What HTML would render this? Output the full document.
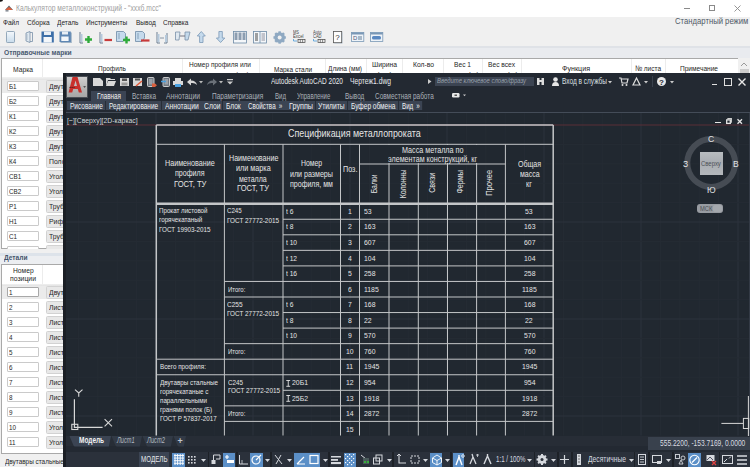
<!DOCTYPE html><html><head><meta charset="utf-8"><style>
*{margin:0;padding:0;box-sizing:border-box}
html,body{width:750px;height:467px;overflow:hidden}
body{position:relative;background:#f0f0f0;font-family:'Liberation Sans',sans-serif}
.a{position:absolute;white-space:nowrap}
svg{position:absolute;overflow:visible}

</style></head><body>
<div class="a" style="left:0px;top:0px;width:750px;height:16.8px;background:#ffffff;"></div>
<svg style="left:4px;top:4px" width="10" height="8" viewBox="0 0 10 8"><path d="M1 6 L5 1.5 L9 6 Z" fill="#5a6068"/><path d="M1.8 5.2 L5 3 L8.2 5.2 V6 H1.8Z" fill="#d8603f"/><rect x="1.5" y="6" width="3" height="1.6" fill="#8a9098"/></svg>
<svg style="left:0;top:0" width="3" height="2"><ellipse cx="0.5" cy="0" rx="2.5" ry="1.8" fill="#111"/></svg>
<span class="a" style="left:15.50px;top:3.28px;font-family:'Liberation Sans',sans-serif;font-size:8.5px;color:#a0a0a0;font-weight:400;line-height:11.05px;transform:scaleX(0.7916);transform-origin:0 50%;">Калькулятор металлоконструкций - &quot;xxxб.mcc&quot;</span>
<div class="a" style="left:684px;top:8px;width:6px;height:1px;background:#8a8a8a;"></div>
<div class="a" style="left:709px;top:5px;width:6px;height:6px;border:1px solid #8a8a8a"></div>
<svg style="left:734px;top:5px" width="7" height="7"><path d="M0.5 0.5 L6.5 6.5 M6.5 0.5 L0.5 6.5" stroke="#8a8a8a" stroke-width="0.9"/></svg>
<span class="a" style="left:3.20px;top:18.10px;font-family:'Liberation Sans',sans-serif;font-size:8px;color:#1e1e1e;font-weight:400;line-height:10.40px;transform:scaleX(0.8133);transform-origin:0 50%;">Файл</span>
<span class="a" style="left:26.70px;top:18.10px;font-family:'Liberation Sans',sans-serif;font-size:8px;color:#1e1e1e;font-weight:400;line-height:10.40px;transform:scaleX(0.8251);transform-origin:0 50%;">Сборка</span>
<span class="a" style="left:57.30px;top:18.10px;font-family:'Liberation Sans',sans-serif;font-size:8px;color:#1e1e1e;font-weight:400;line-height:10.40px;transform:scaleX(0.8085);transform-origin:0 50%;">Деталь</span>
<span class="a" style="left:85.90px;top:18.10px;font-family:'Liberation Sans',sans-serif;font-size:8px;color:#1e1e1e;font-weight:400;line-height:10.40px;transform:scaleX(0.8278);transform-origin:0 50%;">Инструменты</span>
<span class="a" style="left:135.50px;top:18.10px;font-family:'Liberation Sans',sans-serif;font-size:8px;color:#1e1e1e;font-weight:400;line-height:10.40px;transform:scaleX(0.8145);transform-origin:0 50%;">Вывод</span>
<span class="a" style="left:162.70px;top:18.10px;font-family:'Liberation Sans',sans-serif;font-size:8px;color:#1e1e1e;font-weight:400;line-height:10.40px;transform:scaleX(0.8060);transform-origin:0 50%;">Справка</span>
<span class="a" style="left:674.70px;top:15.78px;font-family:'Liberation Sans',sans-serif;font-size:8.5px;color:#4f5866;font-weight:400;line-height:11.05px;transform:scaleX(0.9046);transform-origin:0 50%;">Стандартный режим</span>
<div class="a" style="left:0px;top:46px;width:750px;height:2px;background:#dfe2e7;"></div>
<div class="a" style="left:0px;top:48px;width:750px;height:10px;background:#e9ebef;"></div>
<span class="a" style="left:3.50px;top:48.10px;font-family:'Liberation Sans',sans-serif;font-size:8px;color:#4a5a70;font-weight:700;line-height:10.40px;transform:scaleX(0.8373);transform-origin:0 50%;">Отправочные марки</span>
<div class="a" style="left:1px;top:58px;width:737px;height:191px;background:#ffffff;border:1px solid #a9a9a9;border-right:none"></div>
<div class="a" style="left:42px;top:59px;width:1px;height:18px;background:#ececec;"></div>
<div class="a" style="left:182px;top:59px;width:1px;height:18px;background:#ececec;"></div>
<div class="a" style="left:258.5px;top:59px;width:1px;height:18px;background:#ececec;"></div>
<div class="a" style="left:324.7px;top:59px;width:1px;height:18px;background:#ececec;"></div>
<div class="a" style="left:365.7px;top:59px;width:1px;height:18px;background:#ececec;"></div>
<div class="a" style="left:401.5px;top:59px;width:1px;height:18px;background:#ececec;"></div>
<div class="a" style="left:443.4px;top:59px;width:1px;height:18px;background:#ececec;"></div>
<div class="a" style="left:481.5px;top:59px;width:1px;height:18px;background:#ececec;"></div>
<div class="a" style="left:521px;top:59px;width:1px;height:18px;background:#ececec;"></div>
<div class="a" style="left:631px;top:59px;width:1px;height:18px;background:#ececec;"></div>
<div class="a" style="left:664.8px;top:59px;width:1px;height:18px;background:#ececec;"></div>
<div class="a" style="left:2px;top:77px;width:736px;height:3px;background:linear-gradient(#f2f2f2,#e2e2e2)"></div>
<span class="a" style="left:13.00px;top:64.60px;font-family:'Liberation Sans',sans-serif;font-size:8px;color:#262626;font-weight:400;line-height:10.40px;transform:scaleX(0.8410);transform-origin:0 50%;">Марка</span>
<span class="a" style="left:98.00px;top:64.40px;font-family:'Liberation Sans',sans-serif;font-size:8px;color:#262626;font-weight:400;line-height:10.40px;transform:scaleX(0.8105);transform-origin:0 50%;">Профиль</span>
<span class="a" style="left:189.00px;top:60.00px;font-family:'Liberation Sans',sans-serif;font-size:8px;color:#262626;font-weight:400;line-height:10.40px;transform:scaleX(0.8161);transform-origin:0 50%;">Номер профиля или</span>
<span class="a" style="left:189.00px;top:69.50px;font-family:'Liberation Sans',sans-serif;font-size:8px;color:#262626;font-weight:400;line-height:10.40px;transform:scaleX(0.8047);transform-origin:0 50%;">размеры листа (мм)</span>
<span class="a" style="left:274.00px;top:64.50px;font-family:'Liberation Sans',sans-serif;font-size:8px;color:#262626;font-weight:400;line-height:10.40px;transform:scaleX(0.8056);transform-origin:0 50%;">Марка стали</span>
<span class="a" style="left:328.00px;top:64.00px;font-family:'Liberation Sans',sans-serif;font-size:8px;color:#262626;font-weight:400;line-height:10.40px;transform:scaleX(0.8098);transform-origin:0 50%;">Длина (мм)</span>
<span class="a" style="left:371.50px;top:60.00px;font-family:'Liberation Sans',sans-serif;font-size:8px;color:#262626;font-weight:400;line-height:10.40px;transform:scaleX(0.8448);transform-origin:0 50%;">Ширина</span>
<span class="a" style="left:376.50px;top:69.50px;font-family:'Liberation Sans',sans-serif;font-size:8px;color:#262626;font-weight:400;line-height:10.40px;transform:scaleX(0.9187);transform-origin:0 50%;">(мм)</span>
<span class="a" style="left:412.50px;top:60.00px;font-family:'Liberation Sans',sans-serif;font-size:8px;color:#262626;font-weight:400;line-height:10.40px;transform:scaleX(0.8442);transform-origin:0 50%;">Кол-во</span>
<span class="a" style="left:413.50px;top:69.50px;font-family:'Liberation Sans',sans-serif;font-size:8px;color:#262626;font-weight:400;line-height:10.40px;transform:scaleX(0.8498);transform-origin:0 50%;">марок</span>
<span class="a" style="left:454.00px;top:60.00px;font-family:'Liberation Sans',sans-serif;font-size:8px;color:#262626;font-weight:400;line-height:10.40px;transform:scaleX(0.8305);transform-origin:0 50%;">Вес 1</span>
<span class="a" style="left:446.00px;top:69.50px;font-family:'Liberation Sans',sans-serif;font-size:8px;color:#262626;font-weight:400;line-height:10.40px;transform:scaleX(0.9080);transform-origin:0 50%;">марки (кг)</span>
<span class="a" style="left:487.50px;top:60.00px;font-family:'Liberation Sans',sans-serif;font-size:8px;color:#262626;font-weight:400;line-height:10.40px;transform:scaleX(0.8320);transform-origin:0 50%;">Вес всех</span>
<span class="a" style="left:484.50px;top:69.50px;font-family:'Liberation Sans',sans-serif;font-size:8px;color:#262626;font-weight:400;line-height:10.40px;transform:scaleX(0.9084);transform-origin:0 50%;">марок (кг)</span>
<span class="a" style="left:562.00px;top:64.40px;font-family:'Liberation Sans',sans-serif;font-size:8px;color:#262626;font-weight:400;line-height:10.40px;transform:scaleX(0.8920);transform-origin:0 50%;">Функция</span>
<span class="a" style="left:635.00px;top:64.40px;font-family:'Liberation Sans',sans-serif;font-size:8px;color:#262626;font-weight:400;line-height:10.40px;transform:scaleX(0.8133);transform-origin:0 50%;">№ листа</span>
<span class="a" style="left:679.50px;top:64.40px;font-family:'Liberation Sans',sans-serif;font-size:8px;color:#262626;font-weight:400;line-height:10.40px;transform:scaleX(0.8205);transform-origin:0 50%;">Примечание</span>
<div class="a" style="left:738px;top:58px;width:12px;height:191px;background:#f0f0f0;"></div>
<svg style="left:740px;top:62px" width="8" height="5"><path d="M1 4 L4 1 L7 4" fill="none" stroke="#9a9a9a" stroke-width="1"/></svg>
<div class="a" style="left:740px;top:69px;width:9px;height:5px;background:#cdcdcd;"></div>
<div class="a" style="left:2px;top:80px;width:736px;height:12.5px;background:#ebebeb;"></div>
<div class="a" style="left:6.5px;top:81.2px;width:32.3px;height:10.2px;background:#ffffff;border:1px solid #cacaca;border-radius:1px"></div>
<span class="a" style="left:8.80px;top:81.59px;font-family:'Liberation Sans',sans-serif;font-size:7.4px;color:#262626;font-weight:400;line-height:9.62px;transform:scaleX(0.8500);transform-origin:0 50%;">Б1</span>
<div class="a" style="left:45.5px;top:80.0px;width:40px;height:13px;background:#e8e8e8;border:1px solid #d2d2d2;border-radius:1.5px"></div>
<span class="a" style="left:48.80px;top:82.06px;font-family:'Liberation Sans',sans-serif;font-size:7.6px;color:#262626;font-weight:400;line-height:9.88px;transform:scaleX(0.9000);transform-origin:0 50%;">Двутавр</span>
<div class="a" style="left:6.5px;top:96.2px;width:32.3px;height:10.2px;background:#ffffff;border:1px solid #cacaca;border-radius:1px"></div>
<span class="a" style="left:8.80px;top:96.59px;font-family:'Liberation Sans',sans-serif;font-size:7.4px;color:#262626;font-weight:400;line-height:9.62px;transform:scaleX(0.8500);transform-origin:0 50%;">Б2</span>
<div class="a" style="left:45.5px;top:95.0px;width:40px;height:13px;background:#e8e8e8;border:1px solid #d2d2d2;border-radius:1.5px"></div>
<span class="a" style="left:48.80px;top:97.06px;font-family:'Liberation Sans',sans-serif;font-size:7.6px;color:#262626;font-weight:400;line-height:9.88px;transform:scaleX(0.9000);transform-origin:0 50%;">Двутавр</span>
<div class="a" style="left:6.5px;top:111.2px;width:32.3px;height:10.2px;background:#ffffff;border:1px solid #cacaca;border-radius:1px"></div>
<span class="a" style="left:8.80px;top:111.59px;font-family:'Liberation Sans',sans-serif;font-size:7.4px;color:#262626;font-weight:400;line-height:9.62px;transform:scaleX(0.8500);transform-origin:0 50%;">К1</span>
<div class="a" style="left:45.5px;top:110.0px;width:40px;height:13px;background:#e8e8e8;border:1px solid #d2d2d2;border-radius:1.5px"></div>
<span class="a" style="left:48.80px;top:112.06px;font-family:'Liberation Sans',sans-serif;font-size:7.6px;color:#262626;font-weight:400;line-height:9.88px;transform:scaleX(0.9000);transform-origin:0 50%;">Двутавр</span>
<div class="a" style="left:6.5px;top:126.2px;width:32.3px;height:10.2px;background:#ffffff;border:1px solid #cacaca;border-radius:1px"></div>
<span class="a" style="left:8.80px;top:126.59px;font-family:'Liberation Sans',sans-serif;font-size:7.4px;color:#262626;font-weight:400;line-height:9.62px;transform:scaleX(0.8500);transform-origin:0 50%;">К2</span>
<div class="a" style="left:45.5px;top:125.0px;width:40px;height:13px;background:#e8e8e8;border:1px solid #d2d2d2;border-radius:1.5px"></div>
<span class="a" style="left:48.80px;top:127.06px;font-family:'Liberation Sans',sans-serif;font-size:7.6px;color:#262626;font-weight:400;line-height:9.88px;transform:scaleX(0.9000);transform-origin:0 50%;">Двутавр</span>
<div class="a" style="left:6.5px;top:141.2px;width:32.3px;height:10.2px;background:#ffffff;border:1px solid #cacaca;border-radius:1px"></div>
<span class="a" style="left:8.80px;top:141.59px;font-family:'Liberation Sans',sans-serif;font-size:7.4px;color:#262626;font-weight:400;line-height:9.62px;transform:scaleX(0.8500);transform-origin:0 50%;">К3</span>
<div class="a" style="left:45.5px;top:140.0px;width:40px;height:13px;background:#e8e8e8;border:1px solid #d2d2d2;border-radius:1.5px"></div>
<span class="a" style="left:48.80px;top:142.06px;font-family:'Liberation Sans',sans-serif;font-size:7.6px;color:#262626;font-weight:400;line-height:9.88px;transform:scaleX(0.9000);transform-origin:0 50%;">Двутавр</span>
<div class="a" style="left:6.5px;top:156.2px;width:32.3px;height:10.2px;background:#ffffff;border:1px solid #cacaca;border-radius:1px"></div>
<span class="a" style="left:8.80px;top:156.59px;font-family:'Liberation Sans',sans-serif;font-size:7.4px;color:#262626;font-weight:400;line-height:9.62px;transform:scaleX(0.8500);transform-origin:0 50%;">К4</span>
<div class="a" style="left:45.5px;top:155.0px;width:40px;height:13px;background:#e8e8e8;border:1px solid #d2d2d2;border-radius:1.5px"></div>
<span class="a" style="left:48.80px;top:157.06px;font-family:'Liberation Sans',sans-serif;font-size:7.6px;color:#262626;font-weight:400;line-height:9.88px;transform:scaleX(0.9000);transform-origin:0 50%;">Полоса</span>
<div class="a" style="left:6.5px;top:171.2px;width:32.3px;height:10.2px;background:#ffffff;border:1px solid #cacaca;border-radius:1px"></div>
<span class="a" style="left:8.80px;top:171.59px;font-family:'Liberation Sans',sans-serif;font-size:7.4px;color:#262626;font-weight:400;line-height:9.62px;transform:scaleX(0.8500);transform-origin:0 50%;">СВ1</span>
<div class="a" style="left:45.5px;top:170.0px;width:40px;height:13px;background:#e8e8e8;border:1px solid #d2d2d2;border-radius:1.5px"></div>
<span class="a" style="left:48.80px;top:172.06px;font-family:'Liberation Sans',sans-serif;font-size:7.6px;color:#262626;font-weight:400;line-height:9.88px;transform:scaleX(0.9000);transform-origin:0 50%;">Уголок</span>
<div class="a" style="left:6.5px;top:186.2px;width:32.3px;height:10.2px;background:#ffffff;border:1px solid #cacaca;border-radius:1px"></div>
<span class="a" style="left:8.80px;top:186.59px;font-family:'Liberation Sans',sans-serif;font-size:7.4px;color:#262626;font-weight:400;line-height:9.62px;transform:scaleX(0.8500);transform-origin:0 50%;">СВ2</span>
<div class="a" style="left:45.5px;top:185.0px;width:40px;height:13px;background:#e8e8e8;border:1px solid #d2d2d2;border-radius:1.5px"></div>
<span class="a" style="left:48.80px;top:187.06px;font-family:'Liberation Sans',sans-serif;font-size:7.6px;color:#262626;font-weight:400;line-height:9.88px;transform:scaleX(0.9000);transform-origin:0 50%;">Уголок</span>
<div class="a" style="left:6.5px;top:201.2px;width:32.3px;height:10.2px;background:#ffffff;border:1px solid #cacaca;border-radius:1px"></div>
<span class="a" style="left:8.80px;top:201.59px;font-family:'Liberation Sans',sans-serif;font-size:7.4px;color:#262626;font-weight:400;line-height:9.62px;transform:scaleX(0.8500);transform-origin:0 50%;">Р1</span>
<div class="a" style="left:45.5px;top:200.0px;width:40px;height:13px;background:#e8e8e8;border:1px solid #d2d2d2;border-radius:1.5px"></div>
<span class="a" style="left:48.80px;top:202.06px;font-family:'Liberation Sans',sans-serif;font-size:7.6px;color:#262626;font-weight:400;line-height:9.88px;transform:scaleX(0.9000);transform-origin:0 50%;">Труба</span>
<div class="a" style="left:6.5px;top:216.2px;width:32.3px;height:10.2px;background:#ffffff;border:1px solid #cacaca;border-radius:1px"></div>
<span class="a" style="left:8.80px;top:216.59px;font-family:'Liberation Sans',sans-serif;font-size:7.4px;color:#262626;font-weight:400;line-height:9.62px;transform:scaleX(0.8500);transform-origin:0 50%;">Н1</span>
<div class="a" style="left:45.5px;top:215.0px;width:40px;height:13px;background:#e8e8e8;border:1px solid #d2d2d2;border-radius:1.5px"></div>
<span class="a" style="left:48.80px;top:217.06px;font-family:'Liberation Sans',sans-serif;font-size:7.6px;color:#262626;font-weight:400;line-height:9.88px;transform:scaleX(0.9000);transform-origin:0 50%;">Рифленый</span>
<div class="a" style="left:6.5px;top:231.2px;width:32.3px;height:10.2px;background:#ffffff;border:1px solid #cacaca;border-radius:1px"></div>
<span class="a" style="left:8.80px;top:231.59px;font-family:'Liberation Sans',sans-serif;font-size:7.4px;color:#262626;font-weight:400;line-height:9.62px;transform:scaleX(0.8500);transform-origin:0 50%;">С1</span>
<div class="a" style="left:45.5px;top:230.0px;width:40px;height:13px;background:#e8e8e8;border:1px solid #d2d2d2;border-radius:1.5px"></div>
<span class="a" style="left:48.80px;top:232.06px;font-family:'Liberation Sans',sans-serif;font-size:7.6px;color:#262626;font-weight:400;line-height:9.88px;transform:scaleX(0.9000);transform-origin:0 50%;">Труба</span>
<div class="a" style="left:6.5px;top:246.2px;width:32.3px;height:10.2px;background:#ffffff;border:1px solid #cacaca;border-radius:1px"></div>
<div class="a" style="left:45.5px;top:245.0px;width:40px;height:13px;background:#e8e8e8;border:1px solid #d2d2d2;border-radius:1.5px"></div>
<span class="a" style="left:48.80px;top:247.06px;font-family:'Liberation Sans',sans-serif;font-size:7.6px;color:#262626;font-weight:400;line-height:9.88px;transform:scaleX(0.9000);transform-origin:0 50%;">Лист</span>
<div class="a" style="left:1px;top:249px;width:737px;height:4px;background:#f0f0f0;"></div>
<div class="a" style="left:0px;top:253px;width:750px;height:2.5px;background:#dde3ea;"></div>
<div class="a" style="left:0px;top:255.5px;width:750px;height:9px;background:#eceef1;"></div>
<span class="a" style="left:3.50px;top:253.20px;font-family:'Liberation Sans',sans-serif;font-size:8px;color:#43536a;font-weight:700;line-height:10.40px;transform:scaleX(0.8241);transform-origin:0 50%;">Детали</span>
<div class="a" style="left:1px;top:264.3px;width:737px;height:190px;background:#ffffff;border:1px solid #a9a9a9;border-right:none"></div>
<div class="a" style="left:41.9px;top:265px;width:1px;height:19px;background:#ececec;"></div>
<div class="a" style="left:2px;top:284px;width:736px;height:2px;background:linear-gradient(#f0f0f0,#e2e2e2)"></div>
<span class="a" style="left:13.00px;top:266.30px;font-family:'Liberation Sans',sans-serif;font-size:8px;color:#262626;font-weight:400;line-height:10.40px;transform:scaleX(0.8365);transform-origin:0 50%;">Номер</span>
<span class="a" style="left:10.00px;top:274.40px;font-family:'Liberation Sans',sans-serif;font-size:8px;color:#262626;font-weight:400;line-height:10.40px;transform:scaleX(0.8564);transform-origin:0 50%;">позиции</span>
<div class="a" style="left:2px;top:286px;width:736px;height:12.5px;background:#ebebeb;"></div>
<div class="a" style="left:6.5px;top:287.2px;width:32.3px;height:10.2px;background:#ffffff;border:1px solid #a8a8a8;border-radius:1px"></div>
<span class="a" style="left:8.80px;top:287.59px;font-family:'Liberation Sans',sans-serif;font-size:7.4px;color:#262626;font-weight:400;line-height:9.62px;transform:scaleX(0.8500);transform-origin:0 50%;">1</span>
<div class="a" style="left:45.5px;top:286.0px;width:40px;height:13px;background:#e8e8e8;border:1px solid #d2d2d2;border-radius:1.5px"></div>
<span class="a" style="left:48.80px;top:288.06px;font-family:'Liberation Sans',sans-serif;font-size:7.6px;color:#262626;font-weight:400;line-height:9.88px;transform:scaleX(0.9000);transform-origin:0 50%;">Двутавр</span>
<div class="a" style="left:6.5px;top:302.2px;width:32.3px;height:10.2px;background:#ffffff;border:1px solid #cacaca;border-radius:1px"></div>
<span class="a" style="left:8.80px;top:302.59px;font-family:'Liberation Sans',sans-serif;font-size:7.4px;color:#262626;font-weight:400;line-height:9.62px;transform:scaleX(0.8500);transform-origin:0 50%;">2</span>
<div class="a" style="left:45.5px;top:301.0px;width:40px;height:13px;background:#e8e8e8;border:1px solid #d2d2d2;border-radius:1.5px"></div>
<span class="a" style="left:48.80px;top:303.06px;font-family:'Liberation Sans',sans-serif;font-size:7.6px;color:#262626;font-weight:400;line-height:9.88px;transform:scaleX(0.9000);transform-origin:0 50%;">Лист</span>
<div class="a" style="left:6.5px;top:317.2px;width:32.3px;height:10.2px;background:#ffffff;border:1px solid #cacaca;border-radius:1px"></div>
<span class="a" style="left:8.80px;top:317.59px;font-family:'Liberation Sans',sans-serif;font-size:7.4px;color:#262626;font-weight:400;line-height:9.62px;transform:scaleX(0.8500);transform-origin:0 50%;">3</span>
<div class="a" style="left:45.5px;top:316.0px;width:40px;height:13px;background:#e8e8e8;border:1px solid #d2d2d2;border-radius:1.5px"></div>
<span class="a" style="left:48.80px;top:318.06px;font-family:'Liberation Sans',sans-serif;font-size:7.6px;color:#262626;font-weight:400;line-height:9.88px;transform:scaleX(0.9000);transform-origin:0 50%;">Лист</span>
<div class="a" style="left:6.5px;top:332.2px;width:32.3px;height:10.2px;background:#ffffff;border:1px solid #cacaca;border-radius:1px"></div>
<span class="a" style="left:8.80px;top:332.59px;font-family:'Liberation Sans',sans-serif;font-size:7.4px;color:#262626;font-weight:400;line-height:9.62px;transform:scaleX(0.8500);transform-origin:0 50%;">4</span>
<div class="a" style="left:45.5px;top:331.0px;width:40px;height:13px;background:#e8e8e8;border:1px solid #d2d2d2;border-radius:1.5px"></div>
<span class="a" style="left:48.80px;top:333.06px;font-family:'Liberation Sans',sans-serif;font-size:7.6px;color:#262626;font-weight:400;line-height:9.88px;transform:scaleX(0.9000);transform-origin:0 50%;">Лист</span>
<div class="a" style="left:6.5px;top:347.2px;width:32.3px;height:10.2px;background:#ffffff;border:1px solid #cacaca;border-radius:1px"></div>
<span class="a" style="left:8.80px;top:347.59px;font-family:'Liberation Sans',sans-serif;font-size:7.4px;color:#262626;font-weight:400;line-height:9.62px;transform:scaleX(0.8500);transform-origin:0 50%;">5</span>
<div class="a" style="left:45.5px;top:346.0px;width:40px;height:13px;background:#e8e8e8;border:1px solid #d2d2d2;border-radius:1.5px"></div>
<span class="a" style="left:48.80px;top:348.06px;font-family:'Liberation Sans',sans-serif;font-size:7.6px;color:#262626;font-weight:400;line-height:9.88px;transform:scaleX(0.9000);transform-origin:0 50%;">Лист</span>
<div class="a" style="left:6.5px;top:362.2px;width:32.3px;height:10.2px;background:#ffffff;border:1px solid #cacaca;border-radius:1px"></div>
<span class="a" style="left:8.80px;top:362.59px;font-family:'Liberation Sans',sans-serif;font-size:7.4px;color:#262626;font-weight:400;line-height:9.62px;transform:scaleX(0.8500);transform-origin:0 50%;">6</span>
<div class="a" style="left:45.5px;top:361.0px;width:40px;height:13px;background:#e8e8e8;border:1px solid #d2d2d2;border-radius:1.5px"></div>
<span class="a" style="left:48.80px;top:363.06px;font-family:'Liberation Sans',sans-serif;font-size:7.6px;color:#262626;font-weight:400;line-height:9.88px;transform:scaleX(0.9000);transform-origin:0 50%;">Лист</span>
<div class="a" style="left:6.5px;top:377.2px;width:32.3px;height:10.2px;background:#ffffff;border:1px solid #cacaca;border-radius:1px"></div>
<span class="a" style="left:8.80px;top:377.59px;font-family:'Liberation Sans',sans-serif;font-size:7.4px;color:#262626;font-weight:400;line-height:9.62px;transform:scaleX(0.8500);transform-origin:0 50%;">7</span>
<div class="a" style="left:45.5px;top:376.0px;width:40px;height:13px;background:#e8e8e8;border:1px solid #d2d2d2;border-radius:1.5px"></div>
<span class="a" style="left:48.80px;top:378.06px;font-family:'Liberation Sans',sans-serif;font-size:7.6px;color:#262626;font-weight:400;line-height:9.88px;transform:scaleX(0.9000);transform-origin:0 50%;">Лист</span>
<div class="a" style="left:6.5px;top:392.2px;width:32.3px;height:10.2px;background:#ffffff;border:1px solid #cacaca;border-radius:1px"></div>
<span class="a" style="left:8.80px;top:392.59px;font-family:'Liberation Sans',sans-serif;font-size:7.4px;color:#262626;font-weight:400;line-height:9.62px;transform:scaleX(0.8500);transform-origin:0 50%;">8</span>
<div class="a" style="left:45.5px;top:391.0px;width:40px;height:13px;background:#e8e8e8;border:1px solid #d2d2d2;border-radius:1.5px"></div>
<span class="a" style="left:48.80px;top:393.06px;font-family:'Liberation Sans',sans-serif;font-size:7.6px;color:#262626;font-weight:400;line-height:9.88px;transform:scaleX(0.9000);transform-origin:0 50%;">Лист</span>
<div class="a" style="left:6.5px;top:407.2px;width:32.3px;height:10.2px;background:#ffffff;border:1px solid #cacaca;border-radius:1px"></div>
<span class="a" style="left:8.80px;top:407.59px;font-family:'Liberation Sans',sans-serif;font-size:7.4px;color:#262626;font-weight:400;line-height:9.62px;transform:scaleX(0.8500);transform-origin:0 50%;">9</span>
<div class="a" style="left:45.5px;top:406.0px;width:40px;height:13px;background:#e8e8e8;border:1px solid #d2d2d2;border-radius:1.5px"></div>
<span class="a" style="left:48.80px;top:408.06px;font-family:'Liberation Sans',sans-serif;font-size:7.6px;color:#262626;font-weight:400;line-height:9.88px;transform:scaleX(0.9000);transform-origin:0 50%;">Лист</span>
<div class="a" style="left:6.5px;top:422.2px;width:32.3px;height:10.2px;background:#ffffff;border:1px solid #cacaca;border-radius:1px"></div>
<span class="a" style="left:8.80px;top:422.59px;font-family:'Liberation Sans',sans-serif;font-size:7.4px;color:#262626;font-weight:400;line-height:9.62px;transform:scaleX(0.8500);transform-origin:0 50%;">10</span>
<div class="a" style="left:45.5px;top:421.0px;width:40px;height:13px;background:#e8e8e8;border:1px solid #d2d2d2;border-radius:1.5px"></div>
<span class="a" style="left:48.80px;top:423.06px;font-family:'Liberation Sans',sans-serif;font-size:7.6px;color:#262626;font-weight:400;line-height:9.88px;transform:scaleX(0.9000);transform-origin:0 50%;">Уголок</span>
<div class="a" style="left:6.5px;top:437.2px;width:32.3px;height:10.2px;background:#ffffff;border:1px solid #cacaca;border-radius:1px"></div>
<span class="a" style="left:8.80px;top:437.59px;font-family:'Liberation Sans',sans-serif;font-size:7.4px;color:#262626;font-weight:400;line-height:9.62px;transform:scaleX(0.8500);transform-origin:0 50%;">11</span>
<div class="a" style="left:45.5px;top:436.0px;width:40px;height:13px;background:#e8e8e8;border:1px solid #d2d2d2;border-radius:1.5px"></div>
<span class="a" style="left:48.80px;top:438.06px;font-family:'Liberation Sans',sans-serif;font-size:7.6px;color:#262626;font-weight:400;line-height:9.88px;transform:scaleX(0.9000);transform-origin:0 50%;">Уголок</span>
<div class="a" style="left:0px;top:455px;width:750px;height:12px;background:#f0f0f0;"></div>
<span class="a" style="left:5.00px;top:456.60px;font-family:'Liberation Sans',sans-serif;font-size:8px;color:#262626;font-weight:400;line-height:10.40px;transform:scaleX(0.8000);transform-origin:0 50%;">Двутавры стальные горячекатаные</span>
<div class="a" style="left:63px;top:73px;width:687px;height:394px;background:#232932;"></div>
<div class="a" style="left:63px;top:73px;width:3px;height:394px;background:#1b1f25;"></div>
<div class="a" style="left:66px;top:76px;width:22px;height:22px;background:linear-gradient(#d0d0d0,#b4b4b4 60%,#a6a6a6);border:1px solid #4a4f56"></div>
<svg style="left:66px;top:76px" width="22" height="22" viewBox="0 0 22 22"><path d="M2.6 16.6 L6.5 1 H11.5 L16 16.6 H12.8 L11.8 13 H7.2 L6.2 16.6 Z M8 10 H11 L9.6 4.5 Z" fill="#c9302c" fill-rule="evenodd"/><path d="M3.5 11.4 H8.5" stroke="#3a1a1a" stroke-width="1" stroke-dasharray="1.2 0.8"/><path d="M17.2 10.2 H20 L18.6 11.8Z" fill="#333"/></svg>
<svg style="left:93px;top:78px" width="10" height="8"><path d="M0 0 H7 L10 3 V8 H0 Z" fill="#d8d8d8"/></svg>
<svg style="left:106px;top:78px" width="10" height="8"><path d="M0 0 H4 L5 1 H9 V2 H2 L0 8 Z" fill="#d8d8d8"/><path d="M2 3 H10 L8 8 H0 Z" fill="#d8d8d8"/></svg>
<svg style="left:120px;top:78px" width="9" height="8"><path d="M0 0 H9 V8 H0 Z" fill="#d8d8d8"/><rect x="2" y="0.5" width="5" height="2.5" fill="#555"/><rect x="1.5" y="4.5" width="6" height="3" fill="#999"/></svg>
<svg style="left:133px;top:78px" width="9" height="8"><path d="M0 0 H9 V8 H0 Z" fill="#d8d8d8"/><rect x="2" y="0.5" width="5" height="2" fill="#555"/><path d="M3 8 L9 3" stroke="#e05a3a" stroke-width="1.5"/></svg>
<svg style="left:147px;top:77px" width="10" height="10"><rect x="0.5" y="0.5" width="6.5" height="9" rx="1" fill="#6f767f" stroke="#d8d8d8" stroke-width="0.9"/><rect x="2" y="2" width="3.5" height="5.5" fill="#9aa1a9"/><path d="M5 6.5 H8 L10 8.2 L8 10 H5Z" fill="#d9603f"/></svg>
<svg style="left:160.5px;top:77px" width="9" height="10"><rect x="2" y="0.5" width="6.5" height="9" rx="1" fill="#6f767f" stroke="#d8d8d8" stroke-width="0.9"/><rect x="3.5" y="2" width="3.5" height="5.5" fill="#9aa1a9"/><path d="M0 4.5 H5" stroke="#4aa0e0" stroke-width="1.5"/></svg>
<svg style="left:173px;top:78px" width="10" height="9"><rect x="2" y="0" width="6" height="3" fill="#d8d8d8"/><rect x="0" y="3" width="10" height="4" fill="#d8d8d8"/><rect x="2" y="6" width="6" height="3" fill="#4aa0e0"/></svg>
<svg style="left:187px;top:78px" width="10" height="8"><path d="M0 4 L4 0.5 V2.5 Q9 2.5 10 7 Q8 4.5 4 5 V7.5 Z" fill="#d8d8d8"/></svg>
<svg style="left:199px;top:81px" width="4" height="3"><path d="M0 0 H4 L2 2.5Z" fill="#bbb"/></svg>
<svg style="left:207px;top:78px" width="10" height="8"><path d="M10 4 L6 0.5 V2.5 Q1 2.5 0 7 Q2 4.5 6 5 V7.5 Z" fill="#6a7078"/></svg>
<svg style="left:219px;top:81px" width="4" height="3"><path d="M0 0 H4 L2 2.5Z" fill="#bbb"/></svg>
<svg style="left:227px;top:79px" width="6" height="6"><rect x="0" y="0" width="6" height="1.2" fill="#ccc"/><path d="M0 2.5 H6 L3 5.5Z" fill="#ccc"/></svg>
<span class="a" style="left:270.80px;top:76.27px;font-family:'Liberation Sans',sans-serif;font-size:8.5px;color:#e8eaec;font-weight:400;line-height:11.05px;transform:scaleX(0.7656);transform-origin:0 50%;">Autodesk AutoCAD 2020</span>
<span class="a" style="left:349.50px;top:76.27px;font-family:'Liberation Sans',sans-serif;font-size:8.5px;color:#e8eaec;font-weight:400;line-height:11.05px;transform:scaleX(0.7925);transform-origin:0 50%;">Чертеж1.dwg</span>
<svg style="left:428px;top:79px" width="4" height="5"><path d="M0 0 L3.5 2.5 L0 5Z" fill="#ccc"/></svg>
<div class="a" style="left:435px;top:76.7px;width:99px;height:9.7px;background:#3c4452;"></div>
<span class="a" style="left:437.00px;top:76.30px;font-family:'Liberation Sans',sans-serif;font-size:8px;color:#98a0aa;font-weight:400;line-height:10.40px;font-style:italic;transform:scaleX(0.7413);transform-origin:0 50%;">Введите ключевое слово/фразу</span>
<svg style="left:537px;top:77px" width="7" height="8"><rect x="0" y="1" width="2.5" height="7" fill="#ddd"/><rect x="4.5" y="1" width="2.5" height="7" fill="#ddd"/><rect x="1.5" y="3" width="4" height="2" fill="#ddd"/></svg>
<svg style="left:552px;top:77px" width="7" height="9"><circle cx="3.5" cy="2.5" r="2.3" fill="#e6e6e6"/><path d="M0 9 Q0 5 3.5 5 Q7 5 7 9Z" fill="#e6e6e6"/></svg>
<span class="a" style="left:562.00px;top:75.97px;font-family:'Liberation Sans',sans-serif;font-size:8.5px;color:#dde0e4;font-weight:400;line-height:11.05px;transform:scaleX(0.7653);transform-origin:0 50%;">Вход в службы</span>
<svg style="left:607.5px;top:80.5px" width="4" height="3"><path d="M0 0 H4 L2 2.5Z" fill="#ccc"/></svg>
<svg style="left:619px;top:77px" width="9" height="9"><path d="M0 1 H2 L3 6 H8 L9 2 H2.5" stroke="#ddd" fill="none" stroke-width="1.2"/><circle cx="3.5" cy="8" r="1" fill="#ddd"/><circle cx="7.5" cy="8" r="1" fill="#ddd"/></svg>
<svg style="left:632px;top:77px" width="9" height="9"><path d="M4.5 1 L8 8 H1 Z" stroke="#ddd" fill="none" stroke-width="1.2"/></svg>
<svg style="left:643.5px;top:80.5px" width="4" height="3"><path d="M0 0 H4 L2 2.5Z" fill="#ccc"/></svg>
<div class="a" style="left:652px;top:76px;width:1px;height:11px;background:#3a414c;"></div>
<svg style="left:657px;top:77px" width="9" height="9"><circle cx="4.5" cy="4.5" r="4.5" fill="#e8e8e8"/><text x="4.5" y="7.5" font-size="8" font-weight="700" text-anchor="middle" fill="#232932" font-family="Liberation Sans">?</text></svg>
<svg style="left:670px;top:80.5px" width="4" height="3"><path d="M0 0 H4 L2 2.5Z" fill="#ccc"/></svg>
<div class="a" style="left:711.7px;top:83.6px;width:5.6px;height:1.4px;background:#e0e0e0;"></div>
<div class="a" style="left:724px;top:77.5px;width:8px;height:8px;border:1.3px solid #e0e0e0"></div>
<svg style="left:738px;top:77.5px" width="8" height="8"><path d="M0.5 0.5 L7.5 7.5 M7.5 0.5 L0.5 7.5" stroke="#e8e8e8" stroke-width="1.4"/></svg>
<div class="a" style="left:90.7px;top:90.8px;width:35.2px;height:10px;background:#3b4453;"></div>
<span class="a" style="left:96.50px;top:90.67px;font-family:'Liberation Sans',sans-serif;font-size:8.5px;color:#f4f4f4;font-weight:400;line-height:11.05px;transform:scaleX(0.7417);transform-origin:0 50%;">Главная</span>
<span class="a" style="left:131.70px;top:90.77px;font-family:'Liberation Sans',sans-serif;font-size:8.5px;color:#aab0b8;font-weight:400;line-height:11.05px;transform:scaleX(0.7596);transform-origin:0 50%;">Вставка</span>
<span class="a" style="left:166.30px;top:90.77px;font-family:'Liberation Sans',sans-serif;font-size:8.5px;color:#aab0b8;font-weight:400;line-height:11.05px;transform:scaleX(0.8000);transform-origin:0 50%;">Аннотации</span>
<span class="a" style="left:211.70px;top:90.77px;font-family:'Liberation Sans',sans-serif;font-size:8.5px;color:#aab0b8;font-weight:400;line-height:11.05px;transform:scaleX(0.7680);transform-origin:0 50%;">Параметризация</span>
<span class="a" style="left:274.50px;top:90.77px;font-family:'Liberation Sans',sans-serif;font-size:8.5px;color:#aab0b8;font-weight:400;line-height:11.05px;transform:scaleX(0.7147);transform-origin:0 50%;">Вид</span>
<span class="a" style="left:296.70px;top:90.77px;font-family:'Liberation Sans',sans-serif;font-size:8.5px;color:#aab0b8;font-weight:400;line-height:11.05px;transform:scaleX(0.7045);transform-origin:0 50%;">Управление</span>
<span class="a" style="left:344.70px;top:90.77px;font-family:'Liberation Sans',sans-serif;font-size:8.5px;color:#aab0b8;font-weight:400;line-height:11.05px;transform:scaleX(0.7509);transform-origin:0 50%;">Вывод</span>
<span class="a" style="left:375.30px;top:90.77px;font-family:'Liberation Sans',sans-serif;font-size:8.5px;color:#aab0b8;font-weight:400;line-height:11.05px;transform:scaleX(0.7547);transform-origin:0 50%;">Совместная работа</span>
<svg style="left:452px;top:93px" width="14" height="5"><rect x="0" y="0" width="7.5" height="4.5" rx="1.2" fill="#e8e8e8"/><rect x="2.5" y="1.5" width="2.5" height="1.5" fill="#555"/><path d="M11 1.5 H14 L12.5 3.2Z" fill="#ccc"/></svg>
<div class="a" style="left:67px;top:100.5px;width:38.599999999999994px;height:9.6px;background:#3b4453;"></div>
<div class="a" style="left:105.1px;top:100.5px;width:1px;height:9.6px;background:#272d36;"></div>
<span class="a" style="left:69.60px;top:100.77px;font-family:'Liberation Sans',sans-serif;font-size:8.5px;color:#eef0f2;font-weight:400;line-height:11.05px;transform:scaleX(0.7661);transform-origin:0 50%;">Рисование</span>
<div class="a" style="left:105.6px;top:100.5px;width:56.0px;height:9.6px;background:#3b4453;"></div>
<div class="a" style="left:161.1px;top:100.5px;width:1px;height:9.6px;background:#272d36;"></div>
<span class="a" style="left:108.80px;top:100.77px;font-family:'Liberation Sans',sans-serif;font-size:8.5px;color:#eef0f2;font-weight:400;line-height:11.05px;transform:scaleX(0.7581);transform-origin:0 50%;">Редактирование</span>
<div class="a" style="left:161.6px;top:100.5px;width:39.400000000000006px;height:9.6px;background:#3b4453;"></div>
<div class="a" style="left:200.5px;top:100.5px;width:1px;height:9.6px;background:#272d36;"></div>
<span class="a" style="left:164.50px;top:100.77px;font-family:'Liberation Sans',sans-serif;font-size:8.5px;color:#eef0f2;font-weight:400;line-height:11.05px;transform:scaleX(0.7953);transform-origin:0 50%;">Аннотации</span>
<div class="a" style="left:201px;top:100.5px;width:21.5px;height:9.6px;background:#3b4453;"></div>
<div class="a" style="left:222.0px;top:100.5px;width:1px;height:9.6px;background:#272d36;"></div>
<span class="a" style="left:203.70px;top:100.77px;font-family:'Liberation Sans',sans-serif;font-size:8.5px;color:#eef0f2;font-weight:400;line-height:11.05px;transform:scaleX(0.7982);transform-origin:0 50%;">Слои</span>
<div class="a" style="left:222.5px;top:100.5px;width:21.5px;height:9.6px;background:#3b4453;"></div>
<div class="a" style="left:243.5px;top:100.5px;width:1px;height:9.6px;background:#272d36;"></div>
<span class="a" style="left:226.30px;top:100.77px;font-family:'Liberation Sans',sans-serif;font-size:8.5px;color:#eef0f2;font-weight:400;line-height:11.05px;transform:scaleX(0.7743);transform-origin:0 50%;">Блок</span>
<div class="a" style="left:244px;top:100.5px;width:42px;height:9.6px;background:#3b4453;"></div>
<div class="a" style="left:285.5px;top:100.5px;width:1px;height:9.6px;background:#272d36;"></div>
<span class="a" style="left:247.70px;top:100.77px;font-family:'Liberation Sans',sans-serif;font-size:8.5px;color:#eef0f2;font-weight:400;line-height:11.05px;transform:scaleX(0.7406);transform-origin:0 50%;">Свойства »</span>
<div class="a" style="left:286px;top:100.5px;width:29.5px;height:9.6px;background:#3b4453;"></div>
<div class="a" style="left:315.0px;top:100.5px;width:1px;height:9.6px;background:#272d36;"></div>
<span class="a" style="left:288.70px;top:100.77px;font-family:'Liberation Sans',sans-serif;font-size:8.5px;color:#eef0f2;font-weight:400;line-height:11.05px;transform:scaleX(0.8472);transform-origin:0 50%;">Группы</span>
<div class="a" style="left:315.5px;top:100.5px;width:32.0px;height:9.6px;background:#3b4453;"></div>
<div class="a" style="left:347.0px;top:100.5px;width:1px;height:9.6px;background:#272d36;"></div>
<span class="a" style="left:318.00px;top:100.77px;font-family:'Liberation Sans',sans-serif;font-size:8.5px;color:#eef0f2;font-weight:400;line-height:11.05px;transform:scaleX(0.7907);transform-origin:0 50%;">Утилиты</span>
<div class="a" style="left:347.5px;top:100.5px;width:51.0px;height:9.6px;background:#3b4453;"></div>
<div class="a" style="left:398.0px;top:100.5px;width:1px;height:9.6px;background:#272d36;"></div>
<span class="a" style="left:350.80px;top:100.77px;font-family:'Liberation Sans',sans-serif;font-size:8.5px;color:#eef0f2;font-weight:400;line-height:11.05px;transform:scaleX(0.7704);transform-origin:0 50%;">Буфер обмена</span>
<div class="a" style="left:398.5px;top:100.5px;width:23.5px;height:9.6px;background:#3b4453;"></div>
<div class="a" style="left:421.5px;top:100.5px;width:1px;height:9.6px;background:#272d36;"></div>
<span class="a" style="left:401.50px;top:100.77px;font-family:'Liberation Sans',sans-serif;font-size:8.5px;color:#eef0f2;font-weight:400;line-height:11.05px;transform:scaleX(0.7307);transform-origin:0 50%;">Вид »</span>
<div class="a" style="left:66px;top:112px;width:684px;height:1px;background:#444c58;"></div>
<div class="a" style="left:66px;top:113px;width:684px;height:322.5px;background:#212830;"></div>
<svg style="left:66px;top:113px" width="684" height="322.5"><line x1="12.4" y1="0" x2="12.4" y2="322.5" stroke="#252c34" stroke-width="1"/><line x1="31.8" y1="0" x2="31.8" y2="322.5" stroke="#252c34" stroke-width="1"/><line x1="51.2" y1="0" x2="51.2" y2="322.5" stroke="#252c34" stroke-width="1"/><line x1="70.6" y1="0" x2="70.6" y2="322.5" stroke="#252c34" stroke-width="1"/><line x1="90.0" y1="0" x2="90.0" y2="322.5" stroke="#2c333d" stroke-width="1"/><line x1="109.4" y1="0" x2="109.4" y2="322.5" stroke="#252c34" stroke-width="1"/><line x1="128.8" y1="0" x2="128.8" y2="322.5" stroke="#252c34" stroke-width="1"/><line x1="148.2" y1="0" x2="148.2" y2="322.5" stroke="#252c34" stroke-width="1"/><line x1="167.6" y1="0" x2="167.6" y2="322.5" stroke="#252c34" stroke-width="1"/><line x1="187.0" y1="0" x2="187.0" y2="322.5" stroke="#2c333d" stroke-width="1"/><line x1="206.4" y1="0" x2="206.4" y2="322.5" stroke="#252c34" stroke-width="1"/><line x1="225.8" y1="0" x2="225.8" y2="322.5" stroke="#252c34" stroke-width="1"/><line x1="245.2" y1="0" x2="245.2" y2="322.5" stroke="#252c34" stroke-width="1"/><line x1="264.6" y1="0" x2="264.6" y2="322.5" stroke="#252c34" stroke-width="1"/><line x1="284.0" y1="0" x2="284.0" y2="322.5" stroke="#2c333d" stroke-width="1"/><line x1="303.4" y1="0" x2="303.4" y2="322.5" stroke="#252c34" stroke-width="1"/><line x1="322.8" y1="0" x2="322.8" y2="322.5" stroke="#252c34" stroke-width="1"/><line x1="342.2" y1="0" x2="342.2" y2="322.5" stroke="#252c34" stroke-width="1"/><line x1="361.6" y1="0" x2="361.6" y2="322.5" stroke="#252c34" stroke-width="1"/><line x1="381.0" y1="0" x2="381.0" y2="322.5" stroke="#2c333d" stroke-width="1"/><line x1="400.4" y1="0" x2="400.4" y2="322.5" stroke="#252c34" stroke-width="1"/><line x1="419.8" y1="0" x2="419.8" y2="322.5" stroke="#252c34" stroke-width="1"/><line x1="439.2" y1="0" x2="439.2" y2="322.5" stroke="#252c34" stroke-width="1"/><line x1="458.6" y1="0" x2="458.6" y2="322.5" stroke="#252c34" stroke-width="1"/><line x1="478.0" y1="0" x2="478.0" y2="322.5" stroke="#2c333d" stroke-width="1"/><line x1="497.4" y1="0" x2="497.4" y2="322.5" stroke="#252c34" stroke-width="1"/><line x1="516.8" y1="0" x2="516.8" y2="322.5" stroke="#252c34" stroke-width="1"/><line x1="536.2" y1="0" x2="536.2" y2="322.5" stroke="#252c34" stroke-width="1"/><line x1="555.6" y1="0" x2="555.6" y2="322.5" stroke="#252c34" stroke-width="1"/><line x1="575.0" y1="0" x2="575.0" y2="322.5" stroke="#2c333d" stroke-width="1"/><line x1="594.4" y1="0" x2="594.4" y2="322.5" stroke="#252c34" stroke-width="1"/><line x1="613.8" y1="0" x2="613.8" y2="322.5" stroke="#252c34" stroke-width="1"/><line x1="633.2" y1="0" x2="633.2" y2="322.5" stroke="#252c34" stroke-width="1"/><line x1="652.6" y1="0" x2="652.6" y2="322.5" stroke="#252c34" stroke-width="1"/><line x1="672.0" y1="0" x2="672.0" y2="322.5" stroke="#2c333d" stroke-width="1"/><line x1="0" y1="12.0" x2="684" y2="12.0" stroke="#5a2f36" stroke-width="1"/><line x1="0" y1="31.4" x2="684" y2="31.4" stroke="#252c34" stroke-width="1"/><line x1="0" y1="50.8" x2="684" y2="50.8" stroke="#252c34" stroke-width="1"/><line x1="0" y1="70.2" x2="684" y2="70.2" stroke="#252c34" stroke-width="1"/><line x1="0" y1="89.6" x2="684" y2="89.6" stroke="#252c34" stroke-width="1"/><line x1="0" y1="109.0" x2="684" y2="109.0" stroke="#2c333d" stroke-width="1"/><line x1="0" y1="128.4" x2="684" y2="128.4" stroke="#252c34" stroke-width="1"/><line x1="0" y1="147.8" x2="684" y2="147.8" stroke="#252c34" stroke-width="1"/><line x1="0" y1="167.2" x2="684" y2="167.2" stroke="#252c34" stroke-width="1"/><line x1="0" y1="186.6" x2="684" y2="186.6" stroke="#252c34" stroke-width="1"/><line x1="0" y1="206.0" x2="684" y2="206.0" stroke="#2c333d" stroke-width="1"/><line x1="0" y1="225.4" x2="684" y2="225.4" stroke="#252c34" stroke-width="1"/><line x1="0" y1="244.8" x2="684" y2="244.8" stroke="#252c34" stroke-width="1"/><line x1="0" y1="264.2" x2="684" y2="264.2" stroke="#252c34" stroke-width="1"/><line x1="0" y1="283.6" x2="684" y2="283.6" stroke="#252c34" stroke-width="1"/><line x1="0" y1="303.0" x2="684" y2="303.0" stroke="#2c333d" stroke-width="1"/></svg>
<div class="a" style="left:748.6px;top:113px;width:1.4px;height:322.5px;background:#333a45;"></div>
<span class="a" style="left:67.30px;top:115.50px;font-family:'Liberation Sans',sans-serif;font-size:8px;color:#d2d5da;font-weight:400;line-height:10.40px;transform:scaleX(0.8586);transform-origin:0 50%;">[−][Сверху][2D-каркас]</span>
<div class="a" style="left:714.8px;top:122px;width:6px;height:1.4px;background:#e6e6e6;"></div>
<svg style="left:726px;top:118.4px" width="6" height="6"><rect x="0.7" y="1.9" width="3.6" height="3.5" fill="none" stroke="#e6e6e6" stroke-width="1.3"/><path d="M1.9 1.9 V0.6 H5.4 V4.2 H4.3" fill="none" stroke="#d0d0d0" stroke-width="1.1"/></svg>
<svg style="left:736.8px;top:119px" width="6" height="5"><path d="M0.5 0.3 L5 4.7 M5 0.3 L0.5 4.7" stroke="#e6e6e6" stroke-width="1.3"/></svg>
<svg style="left:680px;top:132px" width="62" height="64"><circle cx="31.2" cy="31" r="23.9" fill="none" stroke="#464c54" stroke-width="6"/></svg>
<div class="a" style="left:699.5px;top:152px;width:23.5px;height:23.3px;background:linear-gradient(#b8bcc0,#a9adb2 45%,#b4b8bc)"></div>
<span class="a" style="left:701.30px;top:159.12px;font-family:'Liberation Sans',sans-serif;font-size:7.5px;color:#4d5258;font-weight:400;line-height:9.75px;transform:scaleX(0.7895);transform-origin:0 50%;">Сверху</span>
<span class="a" style="left:708.11px;top:132.52px;font-family:'Liberation Sans',sans-serif;font-size:9.5px;color:#e2e4e6;font-weight:400;line-height:12.35px;transform:scaleX(0.9000);transform-origin:0 50%;">С</span>
<span class="a" style="left:706.88px;top:183.82px;font-family:'Liberation Sans',sans-serif;font-size:9.5px;color:#e2e4e6;font-weight:400;line-height:12.35px;transform:scaleX(0.9000);transform-origin:0 50%;">Ю</span>
<span class="a" style="left:682.81px;top:158.02px;font-family:'Liberation Sans',sans-serif;font-size:9.5px;color:#e2e4e6;font-weight:400;line-height:12.35px;transform:scaleX(0.9000);transform-origin:0 50%;">З</span>
<span class="a" style="left:733.45px;top:158.02px;font-family:'Liberation Sans',sans-serif;font-size:9.5px;color:#e2e4e6;font-weight:400;line-height:12.35px;transform:scaleX(0.9000);transform-origin:0 50%;">В</span>
<div class="a" style="left:697.2px;top:204px;width:25.6px;height:8.8px;background:#979ba1;border-radius:3px"></div>
<div class="a" style="left:713px;top:205px;width:9px;height:7px;background:#a4a8ad;border-radius:2px"></div>
<span class="a" style="left:700.00px;top:203.62px;font-family:'Liberation Sans',sans-serif;font-size:7.5px;color:#4a4f55;font-weight:400;line-height:9.75px;transform:scaleX(0.7727);transform-origin:0 50%;">МСК</span>
<svg style="left:66px;top:380px" width="60" height="55"><path d="M8.4 19.3 V47.3 H36.6" stroke="#d8d8d8" stroke-width="1.2" fill="none"/><rect x="5.8" y="44.3" width="6" height="5.2" fill="none" stroke="#d8d8d8" stroke-width="1.1"/><path d="M9 9.6 L12.75 13 L16.5 9.6 M12.75 13 V16.7" stroke="#d8d8d8" stroke-width="1.1" fill="none"/><path d="M38.6 39.2 L46 46.3 M46 39.2 L38.6 46.3" stroke="#d8d8d8" stroke-width="1.1"/></svg>
<svg style="left:715px;top:395px" width="35" height="41"><path d="M6.4 28.4 H28.4" stroke="#d8d8d8" stroke-width="1"/><rect x="28.4" y="23.4" width="5.3" height="10.1" fill="none" stroke="#d8d8d8" stroke-width="1"/><path d="M33.4 1 V41" stroke="#d8d8d8" stroke-width="1"/></svg>
<svg style="left:0;top:0" width="750" height="435.5"><defs><clipPath id="dc"><rect x="66" y="113" width="684" height="322.5"/></clipPath></defs><g clip-path="url(#dc)"><line x1="156.3" y1="125" x2="553.2" y2="125" stroke="#c4c6c8" stroke-width="1.5"/><line x1="156.3" y1="125" x2="156.3" y2="440" stroke="#c4c6c8" stroke-width="1.5"/><line x1="553.2" y1="125" x2="553.2" y2="440" stroke="#c4c6c8" stroke-width="1.5"/><line x1="156.3" y1="144.3" x2="553.2" y2="144.3" stroke="#c4c6c8" stroke-width="1.0"/><line x1="224.4" y1="144.3" x2="224.4" y2="440" stroke="#c4c6c8" stroke-width="1.0"/><line x1="283" y1="144.3" x2="283" y2="440" stroke="#c4c6c8" stroke-width="1.0"/><line x1="340.5" y1="144.3" x2="340.5" y2="440" stroke="#c4c6c8" stroke-width="1.0"/><line x1="359.5" y1="144.3" x2="359.5" y2="440" stroke="#c4c6c8" stroke-width="1.0"/><line x1="389" y1="144.3" x2="389" y2="440" stroke="#c4c6c8" stroke-width="1.0"/><line x1="418.3" y1="144.3" x2="418.3" y2="440" stroke="#c4c6c8" stroke-width="1.0"/><line x1="447.5" y1="144.3" x2="447.5" y2="440" stroke="#c4c6c8" stroke-width="1.0"/><line x1="476.6" y1="144.3" x2="476.6" y2="440" stroke="#c4c6c8" stroke-width="1.0"/><line x1="505.4" y1="144.3" x2="505.4" y2="440" stroke="#c4c6c8" stroke-width="1.0"/><line x1="359.5" y1="164" x2="505.4" y2="164" stroke="#c4c6c8" stroke-width="1.0"/><line x1="156.3" y1="203.7" x2="553.2" y2="203.7" stroke="#c4c6c8" stroke-width="2.4"/><line x1="156.3" y1="359.2" x2="224.4" y2="359.2" stroke="#c4c6c8" stroke-width="1.0"/><line x1="156.3" y1="374.75" x2="224.4" y2="374.75" stroke="#c4c6c8" stroke-width="1.0"/><line x1="224.4" y1="281.45" x2="283" y2="281.45" stroke="#c4c6c8" stroke-width="1.0"/><line x1="224.4" y1="297.0" x2="283" y2="297.0" stroke="#c4c6c8" stroke-width="1.0"/><line x1="224.4" y1="343.65" x2="283" y2="343.65" stroke="#c4c6c8" stroke-width="1.0"/><line x1="224.4" y1="359.2" x2="283" y2="359.2" stroke="#c4c6c8" stroke-width="1.0"/><line x1="224.4" y1="374.75" x2="283" y2="374.75" stroke="#c4c6c8" stroke-width="1.0"/><line x1="224.4" y1="405.85" x2="283" y2="405.85" stroke="#c4c6c8" stroke-width="1.0"/><line x1="224.4" y1="421.4" x2="283" y2="421.4" stroke="#c4c6c8" stroke-width="1.0"/><line x1="283" y1="219.25" x2="340.5" y2="219.25" stroke="#c4c6c8" stroke-width="1.0"/><line x1="283" y1="234.79999999999998" x2="340.5" y2="234.79999999999998" stroke="#c4c6c8" stroke-width="1.0"/><line x1="283" y1="250.35" x2="340.5" y2="250.35" stroke="#c4c6c8" stroke-width="1.0"/><line x1="283" y1="265.9" x2="340.5" y2="265.9" stroke="#c4c6c8" stroke-width="1.0"/><line x1="283" y1="281.45" x2="340.5" y2="281.45" stroke="#c4c6c8" stroke-width="1.0"/><line x1="283" y1="297.0" x2="340.5" y2="297.0" stroke="#c4c6c8" stroke-width="1.0"/><line x1="283" y1="312.55" x2="340.5" y2="312.55" stroke="#c4c6c8" stroke-width="1.0"/><line x1="283" y1="328.1" x2="340.5" y2="328.1" stroke="#c4c6c8" stroke-width="1.0"/><line x1="283" y1="343.65" x2="340.5" y2="343.65" stroke="#c4c6c8" stroke-width="1.0"/><line x1="283" y1="359.2" x2="340.5" y2="359.2" stroke="#c4c6c8" stroke-width="1.0"/><line x1="283" y1="374.75" x2="340.5" y2="374.75" stroke="#c4c6c8" stroke-width="1.0"/><line x1="283" y1="390.3" x2="340.5" y2="390.3" stroke="#c4c6c8" stroke-width="1.0"/><line x1="283" y1="405.85" x2="340.5" y2="405.85" stroke="#c4c6c8" stroke-width="1.0"/><line x1="283" y1="421.4" x2="340.5" y2="421.4" stroke="#c4c6c8" stroke-width="1.0"/><line x1="340.5" y1="219.25" x2="553.2" y2="219.25" stroke="#c4c6c8" stroke-width="1.0"/><line x1="340.5" y1="234.79999999999998" x2="553.2" y2="234.79999999999998" stroke="#c4c6c8" stroke-width="1.0"/><line x1="340.5" y1="250.35" x2="553.2" y2="250.35" stroke="#c4c6c8" stroke-width="1.0"/><line x1="340.5" y1="265.9" x2="553.2" y2="265.9" stroke="#c4c6c8" stroke-width="1.0"/><line x1="340.5" y1="281.45" x2="553.2" y2="281.45" stroke="#c4c6c8" stroke-width="1.0"/><line x1="340.5" y1="297.0" x2="553.2" y2="297.0" stroke="#c4c6c8" stroke-width="1.0"/><line x1="340.5" y1="312.55" x2="553.2" y2="312.55" stroke="#c4c6c8" stroke-width="1.0"/><line x1="340.5" y1="328.1" x2="553.2" y2="328.1" stroke="#c4c6c8" stroke-width="1.0"/><line x1="340.5" y1="343.65" x2="553.2" y2="343.65" stroke="#c4c6c8" stroke-width="1.0"/><line x1="340.5" y1="359.2" x2="553.2" y2="359.2" stroke="#c4c6c8" stroke-width="1.0"/><line x1="340.5" y1="374.75" x2="553.2" y2="374.75" stroke="#c4c6c8" stroke-width="1.0"/><line x1="340.5" y1="390.3" x2="553.2" y2="390.3" stroke="#c4c6c8" stroke-width="1.0"/><line x1="340.5" y1="405.85" x2="553.2" y2="405.85" stroke="#c4c6c8" stroke-width="1.0"/><line x1="340.5" y1="421.4" x2="553.2" y2="421.4" stroke="#c4c6c8" stroke-width="1.0"/></g></svg>
<div class="a" style="left:387.5px;top:145.3px;width:3px;height:18.099999999999987px;background:#212830;"></div>
<div class="a" style="left:416.8px;top:145.3px;width:3px;height:18.099999999999987px;background:#212830;"></div>
<div class="a" style="left:446.0px;top:145.3px;width:3px;height:18.099999999999987px;background:#212830;"></div>
<div class="a" style="left:475.1px;top:145.3px;width:3px;height:18.099999999999987px;background:#212830;"></div>
<span class="a" style="left:288.40px;top:127.00px;font-family:'Liberation Sans',sans-serif;font-size:10.3px;color:#e4e4e4;font-weight:400;line-height:13.39px;transform:scaleX(0.8644);transform-origin:0 50%;">Спецификация металлопроката</span>
<span class="a" style="left:165.05px;top:158.25px;font-family:'Liberation Sans',sans-serif;font-size:9px;color:#e4e4e4;font-weight:400;line-height:11.70px;transform:scaleX(0.7966);transform-origin:0 50%;">Наименование</span>
<span class="a" style="left:175.15px;top:167.95px;font-family:'Liberation Sans',sans-serif;font-size:9px;color:#e4e4e4;font-weight:400;line-height:11.70px;transform:scaleX(0.7877);transform-origin:0 50%;">профиля</span>
<span class="a" style="left:173.70px;top:178.55px;font-family:'Liberation Sans',sans-serif;font-size:9px;color:#e4e4e4;font-weight:400;line-height:11.70px;transform:scaleX(0.8460);transform-origin:0 50%;">ГОСТ, ТУ</span>
<span class="a" style="left:228.60px;top:152.75px;font-family:'Liberation Sans',sans-serif;font-size:9px;color:#e4e4e4;font-weight:400;line-height:11.70px;transform:scaleX(0.7918);transform-origin:0 50%;">Наименование</span>
<span class="a" style="left:235.95px;top:163.25px;font-family:'Liberation Sans',sans-serif;font-size:9px;color:#e4e4e4;font-weight:400;line-height:11.70px;transform:scaleX(0.8041);transform-origin:0 50%;">или марка</span>
<span class="a" style="left:239.45px;top:173.55px;font-family:'Liberation Sans',sans-serif;font-size:9px;color:#e4e4e4;font-weight:400;line-height:11.70px;transform:scaleX(0.7817);transform-origin:0 50%;">металла</span>
<span class="a" style="left:237.30px;top:183.35px;font-family:'Liberation Sans',sans-serif;font-size:9px;color:#e4e4e4;font-weight:400;line-height:11.70px;transform:scaleX(0.8356);transform-origin:0 50%;">ГОСТ, ТУ</span>
<span class="a" style="left:300.50px;top:158.05px;font-family:'Liberation Sans',sans-serif;font-size:9px;color:#e4e4e4;font-weight:400;line-height:11.70px;transform:scaleX(0.7653);transform-origin:0 50%;">Номер</span>
<span class="a" style="left:289.95px;top:168.65px;font-family:'Liberation Sans',sans-serif;font-size:9px;color:#e4e4e4;font-weight:400;line-height:11.70px;transform:scaleX(0.7869);transform-origin:0 50%;">или размеры</span>
<span class="a" style="left:289.95px;top:178.95px;font-family:'Liberation Sans',sans-serif;font-size:9px;color:#e4e4e4;font-weight:400;line-height:11.70px;transform:scaleX(0.7824);transform-origin:0 50%;">профиля, мм</span>
<span class="a" style="left:342.60px;top:163.75px;font-family:'Liberation Sans',sans-serif;font-size:9px;color:#e4e4e4;font-weight:400;line-height:11.70px;transform:scaleX(0.8000);transform-origin:0 50%;">Поз.</span>
<span class="a" style="left:401.60px;top:144.85px;font-family:'Liberation Sans',sans-serif;font-size:9px;color:#e4e4e4;font-weight:400;line-height:11.70px;transform:scaleX(0.7982);transform-origin:0 50%;">Масса металла по</span>
<span class="a" style="left:388.00px;top:153.75px;font-family:'Liberation Sans',sans-serif;font-size:9px;color:#e4e4e4;font-weight:400;line-height:11.70px;transform:scaleX(0.7951);transform-origin:0 50%;">элементам конструкций, кг</span>
<span class="a" style="left:517.95px;top:158.65px;font-family:'Liberation Sans',sans-serif;font-size:9px;color:#e4e4e4;font-weight:400;line-height:11.70px;transform:scaleX(0.7843);transform-origin:0 50%;">Общая</span>
<span class="a" style="left:519.55px;top:169.25px;font-family:'Liberation Sans',sans-serif;font-size:9px;color:#e4e4e4;font-weight:400;line-height:11.70px;transform:scaleX(0.7816);transform-origin:0 50%;">масса</span>
<span class="a" style="left:526.30px;top:178.85px;font-family:'Liberation Sans',sans-serif;font-size:9px;color:#e4e4e4;font-weight:400;line-height:11.70px;transform:scaleX(0.8017);transform-origin:0 50%;">кг</span>
<span class="a" style="left:361.93px;top:177.65px;font-family:'Liberation Sans',sans-serif;font-size:9px;color:#e4e4e4;font-weight:400;line-height:11.70px;transform:rotate(-90deg) scaleX(0.7557);transform-origin:50% 50%;">Балки</span>
<span class="a" style="left:385.29px;top:177.65px;font-family:'Liberation Sans',sans-serif;font-size:9px;color:#e4e4e4;font-weight:400;line-height:11.70px;transform:rotate(-90deg) scaleX(0.7874);transform-origin:50% 50%;">Колонны</span>
<span class="a" style="left:419.89px;top:177.15px;font-family:'Liberation Sans',sans-serif;font-size:9px;color:#e4e4e4;font-weight:400;line-height:11.70px;transform:rotate(-90deg) scaleX(0.7931);transform-origin:50% 50%;">Связи</span>
<span class="a" style="left:445.74px;top:176.45px;font-family:'Liberation Sans',sans-serif;font-size:9px;color:#e4e4e4;font-weight:400;line-height:11.70px;transform:rotate(-90deg) scaleX(0.7928);transform-origin:50% 50%;">Фермы</span>
<span class="a" style="left:474.01px;top:177.15px;font-family:'Liberation Sans',sans-serif;font-size:9px;color:#e4e4e4;font-weight:400;line-height:11.70px;transform:rotate(-90deg) scaleX(0.8391);transform-origin:50% 50%;">Прочее</span>
<span class="a" style="left:286.00px;top:206.93px;font-family:'Liberation Sans',sans-serif;font-size:7.8px;color:#e4e4e4;font-weight:400;line-height:10.14px;transform:scaleX(0.8500);transform-origin:0 50%;">t 6</span>
<span class="a" style="left:348.09px;top:206.93px;font-family:'Liberation Sans',sans-serif;font-size:7.8px;color:#e4e4e4;font-weight:400;line-height:10.14px;transform:scaleX(0.8800);transform-origin:0 50%;">1</span>
<span class="a" style="left:363.70px;top:206.93px;font-family:'Liberation Sans',sans-serif;font-size:7.8px;color:#e4e4e4;font-weight:400;line-height:10.14px;transform:scaleX(0.8800);transform-origin:0 50%;">53</span>
<span class="a" style="left:525.48px;top:206.93px;font-family:'Liberation Sans',sans-serif;font-size:7.8px;color:#e4e4e4;font-weight:400;line-height:10.14px;transform:scaleX(0.8800);transform-origin:0 50%;">53</span>
<span class="a" style="left:286.00px;top:222.48px;font-family:'Liberation Sans',sans-serif;font-size:7.8px;color:#e4e4e4;font-weight:400;line-height:10.14px;transform:scaleX(0.8500);transform-origin:0 50%;">t 8</span>
<span class="a" style="left:348.09px;top:222.48px;font-family:'Liberation Sans',sans-serif;font-size:7.8px;color:#e4e4e4;font-weight:400;line-height:10.14px;transform:scaleX(0.8800);transform-origin:0 50%;">2</span>
<span class="a" style="left:363.70px;top:222.48px;font-family:'Liberation Sans',sans-serif;font-size:7.8px;color:#e4e4e4;font-weight:400;line-height:10.14px;transform:scaleX(0.8800);transform-origin:0 50%;">163</span>
<span class="a" style="left:523.57px;top:222.48px;font-family:'Liberation Sans',sans-serif;font-size:7.8px;color:#e4e4e4;font-weight:400;line-height:10.14px;transform:scaleX(0.8800);transform-origin:0 50%;">163</span>
<span class="a" style="left:286.00px;top:238.03px;font-family:'Liberation Sans',sans-serif;font-size:7.8px;color:#e4e4e4;font-weight:400;line-height:10.14px;transform:scaleX(0.8500);transform-origin:0 50%;">t 10</span>
<span class="a" style="left:348.09px;top:238.03px;font-family:'Liberation Sans',sans-serif;font-size:7.8px;color:#e4e4e4;font-weight:400;line-height:10.14px;transform:scaleX(0.8800);transform-origin:0 50%;">3</span>
<span class="a" style="left:363.70px;top:238.03px;font-family:'Liberation Sans',sans-serif;font-size:7.8px;color:#e4e4e4;font-weight:400;line-height:10.14px;transform:scaleX(0.8800);transform-origin:0 50%;">607</span>
<span class="a" style="left:523.57px;top:238.03px;font-family:'Liberation Sans',sans-serif;font-size:7.8px;color:#e4e4e4;font-weight:400;line-height:10.14px;transform:scaleX(0.8800);transform-origin:0 50%;">607</span>
<span class="a" style="left:286.00px;top:253.58px;font-family:'Liberation Sans',sans-serif;font-size:7.8px;color:#e4e4e4;font-weight:400;line-height:10.14px;transform:scaleX(0.8500);transform-origin:0 50%;">t 12</span>
<span class="a" style="left:348.09px;top:253.58px;font-family:'Liberation Sans',sans-serif;font-size:7.8px;color:#e4e4e4;font-weight:400;line-height:10.14px;transform:scaleX(0.8800);transform-origin:0 50%;">4</span>
<span class="a" style="left:363.70px;top:253.58px;font-family:'Liberation Sans',sans-serif;font-size:7.8px;color:#e4e4e4;font-weight:400;line-height:10.14px;transform:scaleX(0.8800);transform-origin:0 50%;">104</span>
<span class="a" style="left:523.57px;top:253.58px;font-family:'Liberation Sans',sans-serif;font-size:7.8px;color:#e4e4e4;font-weight:400;line-height:10.14px;transform:scaleX(0.8800);transform-origin:0 50%;">104</span>
<span class="a" style="left:286.00px;top:269.13px;font-family:'Liberation Sans',sans-serif;font-size:7.8px;color:#e4e4e4;font-weight:400;line-height:10.14px;transform:scaleX(0.8500);transform-origin:0 50%;">t 16</span>
<span class="a" style="left:348.09px;top:269.13px;font-family:'Liberation Sans',sans-serif;font-size:7.8px;color:#e4e4e4;font-weight:400;line-height:10.14px;transform:scaleX(0.8800);transform-origin:0 50%;">5</span>
<span class="a" style="left:363.70px;top:269.13px;font-family:'Liberation Sans',sans-serif;font-size:7.8px;color:#e4e4e4;font-weight:400;line-height:10.14px;transform:scaleX(0.8800);transform-origin:0 50%;">258</span>
<span class="a" style="left:523.57px;top:269.13px;font-family:'Liberation Sans',sans-serif;font-size:7.8px;color:#e4e4e4;font-weight:400;line-height:10.14px;transform:scaleX(0.8800);transform-origin:0 50%;">258</span>
<span class="a" style="left:348.09px;top:284.68px;font-family:'Liberation Sans',sans-serif;font-size:7.8px;color:#e4e4e4;font-weight:400;line-height:10.14px;transform:scaleX(0.8800);transform-origin:0 50%;">6</span>
<span class="a" style="left:363.70px;top:284.68px;font-family:'Liberation Sans',sans-serif;font-size:7.8px;color:#e4e4e4;font-weight:400;line-height:10.14px;transform:scaleX(0.8800);transform-origin:0 50%;">1185</span>
<span class="a" style="left:521.92px;top:284.68px;font-family:'Liberation Sans',sans-serif;font-size:7.8px;color:#e4e4e4;font-weight:400;line-height:10.14px;transform:scaleX(0.8800);transform-origin:0 50%;">1185</span>
<span class="a" style="left:286.00px;top:300.23px;font-family:'Liberation Sans',sans-serif;font-size:7.8px;color:#e4e4e4;font-weight:400;line-height:10.14px;transform:scaleX(0.8500);transform-origin:0 50%;">t 6</span>
<span class="a" style="left:348.09px;top:300.23px;font-family:'Liberation Sans',sans-serif;font-size:7.8px;color:#e4e4e4;font-weight:400;line-height:10.14px;transform:scaleX(0.8800);transform-origin:0 50%;">7</span>
<span class="a" style="left:363.70px;top:300.23px;font-family:'Liberation Sans',sans-serif;font-size:7.8px;color:#e4e4e4;font-weight:400;line-height:10.14px;transform:scaleX(0.8800);transform-origin:0 50%;">168</span>
<span class="a" style="left:523.57px;top:300.23px;font-family:'Liberation Sans',sans-serif;font-size:7.8px;color:#e4e4e4;font-weight:400;line-height:10.14px;transform:scaleX(0.8800);transform-origin:0 50%;">168</span>
<span class="a" style="left:286.00px;top:315.78px;font-family:'Liberation Sans',sans-serif;font-size:7.8px;color:#e4e4e4;font-weight:400;line-height:10.14px;transform:scaleX(0.8500);transform-origin:0 50%;">t 8</span>
<span class="a" style="left:348.09px;top:315.78px;font-family:'Liberation Sans',sans-serif;font-size:7.8px;color:#e4e4e4;font-weight:400;line-height:10.14px;transform:scaleX(0.8800);transform-origin:0 50%;">8</span>
<span class="a" style="left:363.70px;top:315.78px;font-family:'Liberation Sans',sans-serif;font-size:7.8px;color:#e4e4e4;font-weight:400;line-height:10.14px;transform:scaleX(0.8800);transform-origin:0 50%;">22</span>
<span class="a" style="left:525.48px;top:315.78px;font-family:'Liberation Sans',sans-serif;font-size:7.8px;color:#e4e4e4;font-weight:400;line-height:10.14px;transform:scaleX(0.8800);transform-origin:0 50%;">22</span>
<span class="a" style="left:286.00px;top:331.33px;font-family:'Liberation Sans',sans-serif;font-size:7.8px;color:#e4e4e4;font-weight:400;line-height:10.14px;transform:scaleX(0.8500);transform-origin:0 50%;">t 10</span>
<span class="a" style="left:348.09px;top:331.33px;font-family:'Liberation Sans',sans-serif;font-size:7.8px;color:#e4e4e4;font-weight:400;line-height:10.14px;transform:scaleX(0.8800);transform-origin:0 50%;">9</span>
<span class="a" style="left:363.70px;top:331.33px;font-family:'Liberation Sans',sans-serif;font-size:7.8px;color:#e4e4e4;font-weight:400;line-height:10.14px;transform:scaleX(0.8800);transform-origin:0 50%;">570</span>
<span class="a" style="left:523.57px;top:331.33px;font-family:'Liberation Sans',sans-serif;font-size:7.8px;color:#e4e4e4;font-weight:400;line-height:10.14px;transform:scaleX(0.8800);transform-origin:0 50%;">570</span>
<span class="a" style="left:346.18px;top:346.88px;font-family:'Liberation Sans',sans-serif;font-size:7.8px;color:#e4e4e4;font-weight:400;line-height:10.14px;transform:scaleX(0.8800);transform-origin:0 50%;">10</span>
<span class="a" style="left:363.70px;top:346.88px;font-family:'Liberation Sans',sans-serif;font-size:7.8px;color:#e4e4e4;font-weight:400;line-height:10.14px;transform:scaleX(0.8800);transform-origin:0 50%;">760</span>
<span class="a" style="left:523.57px;top:346.88px;font-family:'Liberation Sans',sans-serif;font-size:7.8px;color:#e4e4e4;font-weight:400;line-height:10.14px;transform:scaleX(0.8800);transform-origin:0 50%;">760</span>
<span class="a" style="left:346.44px;top:362.43px;font-family:'Liberation Sans',sans-serif;font-size:7.8px;color:#e4e4e4;font-weight:400;line-height:10.14px;transform:scaleX(0.8800);transform-origin:0 50%;">11</span>
<span class="a" style="left:363.70px;top:362.43px;font-family:'Liberation Sans',sans-serif;font-size:7.8px;color:#e4e4e4;font-weight:400;line-height:10.14px;transform:scaleX(0.8800);transform-origin:0 50%;">1945</span>
<span class="a" style="left:521.66px;top:362.43px;font-family:'Liberation Sans',sans-serif;font-size:7.8px;color:#e4e4e4;font-weight:400;line-height:10.14px;transform:scaleX(0.8800);transform-origin:0 50%;">1945</span>
<svg style="left:286px;top:379.8px" width="5" height="7"><path d="M0.3 0.5 H4.2 M2.25 0.5 V6.3 M0.3 6.3 H4.2" stroke="#e4e4e4" stroke-width="0.9"/></svg>
<span class="a" style="left:292.30px;top:377.98px;font-family:'Liberation Sans',sans-serif;font-size:7.8px;color:#e4e4e4;font-weight:400;line-height:10.14px;transform:scaleX(0.8800);transform-origin:0 50%;">20Б1</span>
<span class="a" style="left:346.18px;top:377.98px;font-family:'Liberation Sans',sans-serif;font-size:7.8px;color:#e4e4e4;font-weight:400;line-height:10.14px;transform:scaleX(0.8800);transform-origin:0 50%;">12</span>
<span class="a" style="left:363.70px;top:377.98px;font-family:'Liberation Sans',sans-serif;font-size:7.8px;color:#e4e4e4;font-weight:400;line-height:10.14px;transform:scaleX(0.8800);transform-origin:0 50%;">954</span>
<span class="a" style="left:523.57px;top:377.98px;font-family:'Liberation Sans',sans-serif;font-size:7.8px;color:#e4e4e4;font-weight:400;line-height:10.14px;transform:scaleX(0.8800);transform-origin:0 50%;">954</span>
<svg style="left:286px;top:395.3px" width="5" height="7"><path d="M0.3 0.5 H4.2 M2.25 0.5 V6.3 M0.3 6.3 H4.2" stroke="#e4e4e4" stroke-width="0.9"/></svg>
<span class="a" style="left:292.30px;top:393.53px;font-family:'Liberation Sans',sans-serif;font-size:7.8px;color:#e4e4e4;font-weight:400;line-height:10.14px;transform:scaleX(0.8800);transform-origin:0 50%;">25Б2</span>
<span class="a" style="left:346.18px;top:393.53px;font-family:'Liberation Sans',sans-serif;font-size:7.8px;color:#e4e4e4;font-weight:400;line-height:10.14px;transform:scaleX(0.8800);transform-origin:0 50%;">13</span>
<span class="a" style="left:363.70px;top:393.53px;font-family:'Liberation Sans',sans-serif;font-size:7.8px;color:#e4e4e4;font-weight:400;line-height:10.14px;transform:scaleX(0.8800);transform-origin:0 50%;">1918</span>
<span class="a" style="left:521.66px;top:393.53px;font-family:'Liberation Sans',sans-serif;font-size:7.8px;color:#e4e4e4;font-weight:400;line-height:10.14px;transform:scaleX(0.8800);transform-origin:0 50%;">1918</span>
<span class="a" style="left:346.18px;top:409.08px;font-family:'Liberation Sans',sans-serif;font-size:7.8px;color:#e4e4e4;font-weight:400;line-height:10.14px;transform:scaleX(0.8800);transform-origin:0 50%;">14</span>
<span class="a" style="left:363.70px;top:409.08px;font-family:'Liberation Sans',sans-serif;font-size:7.8px;color:#e4e4e4;font-weight:400;line-height:10.14px;transform:scaleX(0.8800);transform-origin:0 50%;">2872</span>
<span class="a" style="left:521.66px;top:409.08px;font-family:'Liberation Sans',sans-serif;font-size:7.8px;color:#e4e4e4;font-weight:400;line-height:10.14px;transform:scaleX(0.8800);transform-origin:0 50%;">2872</span>
<span class="a" style="left:346.18px;top:424.63px;font-family:'Liberation Sans',sans-serif;font-size:7.8px;color:#e4e4e4;font-weight:400;line-height:10.14px;transform:scaleX(0.8800);transform-origin:0 50%;">15</span>
<span class="a" style="left:159.30px;top:206.33px;font-family:'Liberation Sans',sans-serif;font-size:7.8px;color:#e4e4e4;font-weight:400;line-height:10.14px;transform:scaleX(0.7933);transform-origin:0 50%;">Прокат листовой</span>
<span class="a" style="left:159.30px;top:215.43px;font-family:'Liberation Sans',sans-serif;font-size:7.8px;color:#e4e4e4;font-weight:400;line-height:10.14px;transform:scaleX(0.8061);transform-origin:0 50%;">горячекатаный</span>
<span class="a" style="left:159.30px;top:224.93px;font-family:'Liberation Sans',sans-serif;font-size:7.8px;color:#e4e4e4;font-weight:400;line-height:10.14px;transform:scaleX(0.8074);transform-origin:0 50%;">ГОСТ 19903-2015</span>
<span class="a" style="left:226.90px;top:206.33px;font-family:'Liberation Sans',sans-serif;font-size:7.8px;color:#e4e4e4;font-weight:400;line-height:10.14px;transform:scaleX(0.7886);transform-origin:0 50%;">С245</span>
<span class="a" style="left:226.90px;top:215.73px;font-family:'Liberation Sans',sans-serif;font-size:7.8px;color:#e4e4e4;font-weight:400;line-height:10.14px;transform:scaleX(0.8153);transform-origin:0 50%;">ГОСТ 27772-2015</span>
<span class="a" style="left:227.80px;top:284.68px;font-family:'Liberation Sans',sans-serif;font-size:7.8px;color:#e4e4e4;font-weight:400;line-height:10.14px;transform:scaleX(0.7652);transform-origin:0 50%;">Итого:</span>
<span class="a" style="left:226.90px;top:300.23px;font-family:'Liberation Sans',sans-serif;font-size:7.8px;color:#e4e4e4;font-weight:400;line-height:10.14px;transform:scaleX(0.8369);transform-origin:0 50%;">С255</span>
<span class="a" style="left:226.90px;top:309.23px;font-family:'Liberation Sans',sans-serif;font-size:7.8px;color:#e4e4e4;font-weight:400;line-height:10.14px;transform:scaleX(0.8153);transform-origin:0 50%;">ГОСТ 27772-2015</span>
<span class="a" style="left:227.80px;top:346.88px;font-family:'Liberation Sans',sans-serif;font-size:7.8px;color:#e4e4e4;font-weight:400;line-height:10.14px;transform:scaleX(0.7652);transform-origin:0 50%;">Итого:</span>
<span class="a" style="left:159.80px;top:362.43px;font-family:'Liberation Sans',sans-serif;font-size:7.8px;color:#e4e4e4;font-weight:400;line-height:10.14px;transform:scaleX(0.8022);transform-origin:0 50%;">Всего профиля:</span>
<span class="a" style="left:159.80px;top:378.03px;font-family:'Liberation Sans',sans-serif;font-size:7.8px;color:#e4e4e4;font-weight:400;line-height:10.14px;transform:scaleX(0.8078);transform-origin:0 50%;">Двутавры стальные</span>
<span class="a" style="left:159.80px;top:386.73px;font-family:'Liberation Sans',sans-serif;font-size:7.8px;color:#e4e4e4;font-weight:400;line-height:10.14px;transform:scaleX(0.8098);transform-origin:0 50%;">горячекатаные с</span>
<span class="a" style="left:159.80px;top:395.83px;font-family:'Liberation Sans',sans-serif;font-size:7.8px;color:#e4e4e4;font-weight:400;line-height:10.14px;transform:scaleX(0.8013);transform-origin:0 50%;">параллельными</span>
<span class="a" style="left:159.80px;top:405.13px;font-family:'Liberation Sans',sans-serif;font-size:7.8px;color:#e4e4e4;font-weight:400;line-height:10.14px;transform:scaleX(0.8008);transform-origin:0 50%;">гранями полок (Б)</span>
<span class="a" style="left:159.80px;top:413.83px;font-family:'Liberation Sans',sans-serif;font-size:7.8px;color:#e4e4e4;font-weight:400;line-height:10.14px;transform:scaleX(0.7970);transform-origin:0 50%;">ГОСТ Р 57837-2017</span>
<span class="a" style="left:227.50px;top:377.73px;font-family:'Liberation Sans',sans-serif;font-size:7.8px;color:#e4e4e4;font-weight:400;line-height:10.14px;transform:scaleX(0.7993);transform-origin:0 50%;">С245</span>
<span class="a" style="left:227.50px;top:386.23px;font-family:'Liberation Sans',sans-serif;font-size:7.8px;color:#e4e4e4;font-weight:400;line-height:10.14px;transform:scaleX(0.8153);transform-origin:0 50%;">ГОСТ 27772-2015</span>
<span class="a" style="left:227.80px;top:409.03px;font-family:'Liberation Sans',sans-serif;font-size:7.8px;color:#e4e4e4;font-weight:400;line-height:10.14px;transform:scaleX(0.7652);transform-origin:0 50%;">Итого:</span>
<div class="a" style="left:63px;top:435.5px;width:687px;height:32px;background:#232932;"></div>
<div class="a" style="left:63px;top:435.5px;width:3px;height:32px;background:#1b1f25;"></div>
<div class="a" style="left:66px;top:435.5px;width:684px;height:10.5px;background:#272d36;"></div>
<svg style="left:63px;top:435.5px" width="130" height="11"><path d="M6.5 0 H48 L45.8 10.5 H12 Q11 10.5 10.5 9.5 Z" fill="#3b4453"/><path d="M48.5 0 H79 L76.8 10.5 H54 Q53 10.5 52.5 9.5 Z" fill="#323a46"/><path d="M79.5 0 H110 L107.8 10.5 H85 Q84 10.5 83.5 9.5 Z" fill="#323a46"/><path d="M110.5 0 H123 L120.8 10.5 H116 Q115 10.5 114.5 9.5 Z" fill="#323a46"/></svg>
<span class="a" style="left:78.90px;top:435.08px;font-family:'Liberation Sans',sans-serif;font-size:8.5px;color:#f2f2f2;font-weight:700;line-height:11.05px;transform:scaleX(0.7624);transform-origin:0 50%;">Модель</span>
<span class="a" style="left:117.00px;top:435.08px;font-family:'Liberation Sans',sans-serif;font-size:8.5px;color:#b4bac2;font-weight:400;line-height:11.05px;font-style:italic;transform:scaleX(0.6573);transform-origin:0 50%;">Лист1</span>
<span class="a" style="left:147.30px;top:435.08px;font-family:'Liberation Sans',sans-serif;font-size:8.5px;color:#b4bac2;font-weight:400;line-height:11.05px;font-style:italic;transform:scaleX(0.6723);transform-origin:0 50%;">Лист2</span>
<span class="a" style="left:177.57px;top:435.75px;font-family:'Liberation Sans',sans-serif;font-size:9px;color:#c0c6ce;font-weight:700;line-height:11.70px;">+</span>
<div class="a" style="left:648.3px;top:437px;width:101.7px;height:13px;background:#39414d;"></div>
<span class="a" style="left:659.50px;top:437.88px;font-family:'Liberation Sans',sans-serif;font-size:8.5px;color:#d8dbe0;font-weight:400;line-height:11.05px;transform:scaleX(0.7812);transform-origin:0 50%;">555.2200, -153.7169, 0.0000</span>
<div class="a" style="left:66px;top:452px;width:684px;height:15px;background:#2b313b;"></div>
<div class="a" style="left:207.5px;top:452px;width:1.5px;height:15px;background:#1d2127;"></div>
<div class="a" style="left:236px;top:452px;width:1.5px;height:15px;background:#1d2127;"></div>
<div class="a" style="left:270px;top:452px;width:1.5px;height:15px;background:#1d2127;"></div>
<div class="a" style="left:328px;top:452px;width:1.5px;height:15px;background:#1d2127;"></div>
<div class="a" style="left:392px;top:452px;width:1.5px;height:15px;background:#1d2127;"></div>
<div class="a" style="left:450px;top:452px;width:1.5px;height:15px;background:#1d2127;"></div>
<div class="a" style="left:533.5px;top:452px;width:1.5px;height:15px;background:#1d2127;"></div>
<div class="a" style="left:557px;top:452px;width:1.5px;height:15px;background:#1d2127;"></div>
<div class="a" style="left:571px;top:452px;width:1.5px;height:15px;background:#1d2127;"></div>
<div class="a" style="left:633.5px;top:452px;width:1.5px;height:15px;background:#1d2127;"></div>
<div class="a" style="left:648px;top:452px;width:1.5px;height:15px;background:#1d2127;"></div>
<div class="a" style="left:672px;top:452px;width:1.5px;height:15px;background:#1d2127;"></div>
<div class="a" style="left:718.5px;top:452px;width:1.5px;height:15px;background:#1d2127;"></div>
<div class="a" style="left:139px;top:452.2px;width:30.4px;height:14.8px;background:#3b4453;"></div>
<span class="a" style="left:141.00px;top:454.28px;font-family:'Liberation Sans',sans-serif;font-size:8.5px;color:#e4e6ea;font-weight:400;line-height:11.05px;transform:scaleX(0.7342);transform-origin:0 50%;">МОДЕЛЬ</span>
<div class="a" style="left:172.2px;top:452.5px;width:12.800000000000011px;height:14.5px;background:#5b8fc7;"></div>
<div class="a" style="left:222.6px;top:452.5px;width:12.800000000000011px;height:14.5px;background:#5b8fc7;"></div>
<div class="a" style="left:249.8px;top:452.5px;width:12.800000000000011px;height:14.5px;background:#5b8fc7;"></div>
<div class="a" style="left:294px;top:452.5px;width:13.199999999999989px;height:14.5px;background:#5b8fc7;"></div>
<div class="a" style="left:307.2px;top:452.5px;width:12.800000000000011px;height:14.5px;background:#5b8fc7;"></div>
<div class="a" style="left:344px;top:452.5px;width:12px;height:14.5px;background:#5b8fc7;"></div>
<div class="a" style="left:430px;top:452.5px;width:12px;height:14.5px;background:#5b8fc7;"></div>
<div class="a" style="left:453.2px;top:452.5px;width:11.199999999999989px;height:14.5px;background:#5b8fc7;"></div>
<div class="a" style="left:688px;top:452.5px;width:13px;height:14.5px;background:#5b8fc7;"></div>
<svg style="left:201px;top:458.5px" width="5" height="3"><path d="M0 0 H5 L2.5 3Z" fill="#d6d9de"/></svg>
<svg style="left:265.4px;top:458.5px" width="5" height="3"><path d="M0 0 H5 L2.5 3Z" fill="#d6d9de"/></svg>
<svg style="left:286.8px;top:458.5px" width="5" height="3"><path d="M0 0 H5 L2.5 3Z" fill="#d6d9de"/></svg>
<svg style="left:322.8px;top:458.5px" width="5" height="3"><path d="M0 0 H5 L2.5 3Z" fill="#d6d9de"/></svg>
<svg style="left:386.8px;top:458.5px" width="5" height="3"><path d="M0 0 H5 L2.5 3Z" fill="#d6d9de"/></svg>
<svg style="left:423.2px;top:458.5px" width="5" height="3"><path d="M0 0 H5 L2.5 3Z" fill="#d6d9de"/></svg>
<svg style="left:444.8px;top:458.5px" width="5" height="3"><path d="M0 0 H5 L2.5 3Z" fill="#d6d9de"/></svg>
<svg style="left:527px;top:458.5px" width="5" height="3"><path d="M0 0 H5 L2.5 3Z" fill="#d6d9de"/></svg>
<svg style="left:551px;top:458.5px" width="5" height="3"><path d="M0 0 H5 L2.5 3Z" fill="#d6d9de"/></svg>
<svg style="left:628.5px;top:458.5px" width="5" height="3"><path d="M0 0 H5 L2.5 3Z" fill="#d6d9de"/></svg>
<svg style="left:666px;top:458.5px" width="5" height="3"><path d="M0 0 H5 L2.5 3Z" fill="#d6d9de"/></svg>
<svg style="left:173.5px;top:454px" width="10" height="11"><path d="M1.0 0 V11 M0 1.5 H10" stroke="#fff" stroke-width="0.9"/><path d="M3.6 0 V11 M0 4.1 H10" stroke="#fff" stroke-width="0.9"/><path d="M6.2 0 V11 M0 6.7 H10" stroke="#fff" stroke-width="0.9"/><path d="M8.8 0 V11 M0 9.3 H10" stroke="#fff" stroke-width="0.9"/></svg>
<svg style="left:188px;top:455.5px" width="8" height="8"><rect x="0" y="0" width="1.6" height="1.6" fill="#d6d9de"/><rect x="0" y="3" width="1.6" height="1.6" fill="#d6d9de"/><rect x="0" y="6" width="1.6" height="1.6" fill="#d6d9de"/><rect x="3" y="0" width="1.6" height="1.6" fill="#d6d9de"/><rect x="3" y="3" width="1.6" height="1.6" fill="#d6d9de"/><rect x="3" y="6" width="1.6" height="1.6" fill="#d6d9de"/><rect x="6" y="0" width="1.6" height="1.6" fill="#d6d9de"/><rect x="6" y="3" width="1.6" height="1.6" fill="#d6d9de"/><rect x="6" y="6" width="1.6" height="1.6" fill="#d6d9de"/></svg>
<svg style="left:210.6px;top:454px" width="10" height="11"><rect x="0.5" y="6" width="4" height="4" fill="#d6d9de"/><path d="M2.5 6 V1 H9 V5 H5" stroke="#d6d9de" fill="none" stroke-width="1"/></svg>
<svg style="left:224px;top:454px" width="10" height="11"><path d="M1 3 H5 M3 1 V5" stroke="#fff" stroke-width="1.2"/><rect x="3" y="6" width="7" height="3" fill="#fff"/></svg>
<svg style="left:238px;top:454px" width="10" height="11"><path d="M1.5 1 V10 H10" stroke="#d6d9de" fill="none" stroke-width="1"/><path d="M4 6 V10" stroke="#d6d9de" stroke-width="0.8"/></svg>
<svg style="left:251px;top:454px" width="11" height="11"><circle cx="5" cy="6" r="4" fill="none" stroke="#fff" stroke-width="1.2"/><path d="M5 6 L10 1" stroke="#fff" stroke-width="1.1"/></svg>
<svg style="left:274px;top:454px" width="9" height="11"><path d="M1 1 L8 10 M7 1 L2 10" stroke="#d6d9de" stroke-width="1"/></svg>
<svg style="left:296px;top:454px" width="10" height="11"><path d="M1 10 H9 M1 10 L8 3" stroke="#fff" stroke-width="1.2"/></svg>
<svg style="left:309px;top:454px" width="10" height="11"><rect x="1" y="1.5" width="8" height="8" fill="none" stroke="#fff" stroke-width="1.2"/></svg>
<svg style="left:331px;top:454.5px" width="11" height="10"><rect x="0" y="1" width="10" height="1.5" fill="#d6d9de"/><rect x="0" y="4" width="7" height="1.8" fill="#d6d9de"/><rect x="0" y="7" width="10" height="2.1" fill="#d6d9de"/></svg>
<svg style="left:345px;top:453.5px" width="10" height="12"><rect x="0" y="0" width="1.2" height="1.2" fill="#fff"/><rect x="0" y="4" width="1.2" height="1.2" fill="#fff"/><rect x="0" y="8" width="1.2" height="1.2" fill="#fff"/><rect x="2" y="2" width="1.2" height="1.2" fill="#fff"/><rect x="2" y="6" width="1.2" height="1.2" fill="#fff"/><rect x="2" y="10" width="1.2" height="1.2" fill="#fff"/><rect x="4" y="0" width="1.2" height="1.2" fill="#fff"/><rect x="4" y="4" width="1.2" height="1.2" fill="#fff"/><rect x="4" y="8" width="1.2" height="1.2" fill="#fff"/><rect x="6" y="2" width="1.2" height="1.2" fill="#fff"/><rect x="6" y="6" width="1.2" height="1.2" fill="#fff"/><rect x="6" y="10" width="1.2" height="1.2" fill="#fff"/><rect x="8" y="0" width="1.2" height="1.2" fill="#fff"/><rect x="8" y="4" width="1.2" height="1.2" fill="#fff"/><rect x="8" y="8" width="1.2" height="1.2" fill="#fff"/></svg>
<svg style="left:359.5px;top:454px" width="10" height="11"><path d="M1 1 L6 5" stroke="#d6d9de" stroke-width="1"/><rect x="3" y="4" width="6" height="6" fill="#4a5a5a"/><circle cx="5" cy="8" r="1" fill="#3c3"/><circle cx="8" cy="8" r="1" fill="#3c3"/></svg>
<svg style="left:373px;top:454px" width="10" height="11"><rect x="3" y="1" width="6" height="6" fill="none" stroke="#d6d9de" stroke-width="1"/><rect x="0.5" y="4" width="6" height="6" fill="none" stroke="#d6d9de" stroke-width="1"/></svg>
<svg style="left:396.5px;top:454px" width="9" height="11"><path d="M2 0 V9 H9" stroke="#d6d9de" fill="none" stroke-width="1.1"/><path d="M0 2 L2 0 L4 2" stroke="#d6d9de" fill="none"/></svg>
<svg style="left:409.5px;top:454px" width="10" height="11"><rect x="1" y="2" width="8" height="7" fill="none" stroke="#d6d9de" stroke-width="1" stroke-dasharray="2 1"/></svg>
<svg style="left:431.5px;top:453.5px" width="10" height="12"><path d="M5 1 L9.5 4 V8.5 L5 11 L0.5 8.5 V4Z M0.5 4 L5 6.5 L9.5 4 M5 6.5 V11" fill="none" stroke="#fff" stroke-width="0.9"/></svg>
<svg style="left:454.5px;top:453.5px" width="10" height="12"><path d="M4 3 L1 11 M4 3 L7 11 M4 3 V1" stroke="#fff" stroke-width="1.4"/><circle cx="8" cy="2" r="1.3" fill="none" stroke="#fff" stroke-width="0.8"/></svg>
<svg style="left:469px;top:454px" width="10" height="11"><path d="M4 3 L1 10 M4 3 L7 10 M4 3 L3 0" stroke="#d6d9de" stroke-width="1.3"/><path d="M7 1 H10 M8.5 0 V3" stroke="#d6d9de" stroke-width="0.8"/></svg>
<svg style="left:483px;top:454px" width="10" height="11"><path d="M4.5 2 L1 10 M4.5 2 L8 10 M4.5 2 V0" stroke="#d6d9de" stroke-width="1.4"/></svg>
<span class="a" style="left:495.60px;top:454.28px;font-family:'Liberation Sans',sans-serif;font-size:8.5px;color:#d8dbe0;font-weight:400;line-height:11.05px;transform:scaleX(0.7234);transform-origin:0 50%;">1:1 / 100%</span>
<svg style="left:536.7px;top:454px" width="10" height="11"><circle cx="5" cy="5.5" r="3.3" fill="none" stroke="#d6d9de" stroke-width="2.2"/><rect x="4" y="0" width="2" height="11" fill="#d6d9de" transform="rotate(0 5 5.5)"/><rect x="4" y="0" width="2" height="11" fill="#d6d9de" transform="rotate(45 5 5.5)"/><rect x="4" y="0" width="2" height="11" fill="#d6d9de" transform="rotate(90 5 5.5)"/><rect x="4" y="0" width="2" height="11" fill="#d6d9de" transform="rotate(135 5 5.5)"/><circle cx="5" cy="5.5" r="1.5" fill="#2b313b"/></svg>
<svg style="left:560px;top:454px" width="9" height="11"><path d="M4.5 1 V10 M0 5.5 H9" stroke="#d6d9de" stroke-width="1.2"/></svg>
<svg style="left:576.8px;top:454px" width="5" height="11"><rect x="0" y="0" width="4" height="11" fill="#d6d9de"/><path d="M1 2 H3 M1 5 H3 M1 8 H3" stroke="#555" stroke-width="0.8"/></svg>
<span class="a" style="left:588.00px;top:454.28px;font-family:'Liberation Sans',sans-serif;font-size:8.5px;color:#d8dbe0;font-weight:400;line-height:11.05px;transform:scaleX(0.7927);transform-origin:0 50%;">Десятичные</span>
<svg style="left:638px;top:454px" width="8" height="11"><rect x="0.5" y="0.5" width="7" height="10" fill="none" stroke="#d6d9de" stroke-width="1"/><path d="M2 3 H6 M2 5.5 H6 M2 8 H6" stroke="#d6d9de" stroke-width="0.9"/></svg>
<svg style="left:652px;top:454px" width="10" height="11"><rect x="0.5" y="1.5" width="9" height="7" fill="none" stroke="#d6d9de" stroke-width="1"/><rect x="5" y="7" width="4" height="3" fill="#d6d9de"/></svg>
<svg style="left:674.5px;top:454px" width="10" height="11"><rect x="0.5" y="0.5" width="4" height="4" fill="none" stroke="#d6d9de" stroke-width="0.9"/><circle cx="8" cy="4" r="2" fill="none" stroke="#d6d9de" stroke-width="0.9"/><path d="M4 10 L6 6 L8 10Z" fill="none" stroke="#d6d9de" stroke-width="0.9"/></svg>
<svg style="left:689px;top:453.5px" width="11" height="12"><circle cx="5.5" cy="6" r="4.7" fill="none" stroke="#fff" stroke-width="1.1"/><path d="M3 8.5 L8 3.5" stroke="#fff" stroke-width="1.2"/></svg>
<svg style="left:706px;top:454px" width="10" height="11"><rect x="0.5" y="1" width="8" height="6" fill="#d6d9de"/><path d="M1 6 L4 3 L7 6" stroke="#556" fill="none"/><path d="M6 7 L10 11 M10 7 L6 11" stroke="#e04040" stroke-width="1.3"/></svg>
<svg style="left:722px;top:454px" width="11" height="11"><rect x="0.5" y="1.5" width="10" height="8" fill="none" stroke="#d6d9de" stroke-width="1"/><path d="M2 8 L5 5 M7 4.5 L9 2.5" stroke="#d6d9de" stroke-width="1"/></svg>
<svg style="left:737px;top:454.5px" width="10" height="10"><path d="M0 1 H10 M0 5 H10 M0 9 H10" stroke="#d6d9de" stroke-width="1.3"/></svg>
<svg style="left:6px;top:31px" width="9" height="12"><defs><linearGradient id="g1" x1="0" y1="0" x2="0" y2="1"><stop offset="0" stop-color="#f4f8fc"/><stop offset="1" stop-color="#c9dcec"/></linearGradient></defs><rect x="0.5" y="0.5" width="8" height="11" rx="0.8" fill="url(#g1)" stroke="#8aa0b4" stroke-width="0.9"/></svg>
<svg style="left:25px;top:31px" width="8" height="12"><path d="M1 2 L5 0.5 V11.5 L1 10Z" fill="#dfe8f0" stroke="#7890a8" stroke-width="0.8"/><path d="M5 1.5 H7.5 V10.5 H5" fill="none" stroke="#7890a8" stroke-width="0.8"/><path d="M2 3 V9" stroke="#9ab" stroke-width="0.6"/></svg>
<svg style="left:40.7px;top:30.7px" width="13.3" height="12"><rect x="0.5" y="0.5" width="12.3" height="11" fill="#3d6fa8"/><rect x="3" y="0.5" width="7" height="3.5" fill="#e8eef4"/><rect x="2.5" y="6" width="8.3" height="5.5" fill="#f4f7fa"/></svg>
<svg style="left:58.7px;top:30.7px" width="13.3" height="12"><rect x="1.5" y="1.5" width="11.3" height="10.5" fill="#9fb3c6"/><rect x="0.5" y="0.5" width="11.3" height="10.5" fill="#5f87b3"/><rect x="3" y="0.5" width="6" height="3" fill="#e8eef4"/><rect x="2.3" y="5.5" width="7.3" height="4.5" fill="#f4f7fa"/></svg>
<svg style="left:79px;top:30.5px" width="13" height="13"><path d="M1 1 V12 M1 12 H4" stroke="#6d7f92" stroke-width="1"/><rect x="1.5" y="3" width="2" height="8" fill="#b5c9dc"/><path d="M6 8.5 H13 M9.5 5 V12" stroke="#2eaa3a" stroke-width="2.4"/></svg>
<svg style="left:98.5px;top:30.5px" width="13" height="13"><path d="M1 1 V12 M1 12 H4" stroke="#6d7f92" stroke-width="1"/><rect x="1.5" y="3" width="2" height="8" fill="#b5c9dc"/><path d="M5.5 9 H13" stroke="#c83a3a" stroke-width="2.2"/></svg>
<svg style="left:116px;top:30.5px" width="15" height="13"><path d="M0.5 0.5 H7.5 L9.5 2.5 V7 L7 10.5 H0.5Z" fill="#c5daec" stroke="#6d8aa6" stroke-width="0.8"/><path d="M2 3 H4 M2 5 H4 M2 7 H4" stroke="#6d8aa6" stroke-width="0.7"/><path d="M7 9 H14 M10.5 5.5 V12.5" stroke="#2eaa3a" stroke-width="2.4"/></svg>
<svg style="left:135.3px;top:30.5px" width="15" height="13"><path d="M0.5 0.5 H7.5 L9.5 2.5 V7 L7 10.5 H0.5Z" fill="#c5daec" stroke="#6d8aa6" stroke-width="0.8"/><path d="M2 3 H4 M2 5 H4 M2 7 H4" stroke="#6d8aa6" stroke-width="0.7"/><path d="M6 9.5 H14.5" stroke="#c83a3a" stroke-width="2.2"/></svg>
<svg style="left:156px;top:30.5px" width="13" height="13"><path d="M1 1 V12 H4 M11 2 V12 H8" stroke="#6d7f92" stroke-width="1" fill="none"/><rect x="1.5" y="3" width="2" height="8" fill="#b5c9dc"/><rect x="9" y="4" width="2" height="7" fill="#b5c9dc"/><path d="M4 7 H8" stroke="#6d7f92" stroke-width="0.8"/></svg>
<svg style="left:174.7px;top:31px" width="15.3" height="11"><path d="M0.5 1 H5 L4 9 H0.5Z" fill="#dfe8f0" stroke="#7890a8" stroke-width="0.8"/><path d="M10 1 H15 L13 9 H10Z" fill="#c5daec" stroke="#7890a8" stroke-width="0.8"/><path d="M5 5 H10" stroke="#556" stroke-width="0.8"/></svg>
<svg style="left:196.7px;top:31px" width="8.6" height="12"><path d="M4.3 0.5 L8.3 5 H6 V11.5 H2.6 V5 H0.3Z" fill="#c5daec" stroke="#7a98b6" stroke-width="0.8"/></svg>
<svg style="left:216px;top:31px" width="9.3" height="12"><path d="M4.6 11.5 L8.8 7 H6.3 V0.5 H2.9 V7 H0.4Z" fill="#c5daec" stroke="#7a98b6" stroke-width="0.8"/></svg>
<svg style="left:233.3px;top:30.5px" width="14" height="12.5"><rect x="0.5" y="0.5" width="13" height="11.5" fill="#f4f7fa" stroke="#6d8aa6" stroke-width="0.8"/><rect x="1.5" y="1.5" width="3" height="7.5" fill="#8d9eb0"/><rect x="5.5" y="1.5" width="3" height="7.5" fill="#8d9eb0"/><rect x="9.5" y="1.5" width="3" height="7.5" fill="#8d9eb0"/></svg>
<svg style="left:252.7px;top:30.5px" width="14" height="12.5"><rect x="0.5" y="0.5" width="13" height="11.5" fill="#f4f7fa" stroke="#6d8aa6" stroke-width="0.8"/><path d="M7 0.5 V12" stroke="#6d8aa6" stroke-width="0.8"/><path d="M2 3 H5 M2 5 H5 M2 7 H5 M2 9 H5" stroke="#333" stroke-width="0.9"/><path d="M8.5 3 H12 M8.5 5 H12 M8.5 7 H12 M8.5 9 H12" stroke="#667" stroke-width="0.7"/></svg>
<svg style="left:272.7px;top:30.5px" width="13.3" height="13"><circle cx="6.65" cy="6.5" r="4" fill="none" stroke="#8fa9c2" stroke-width="2.6"/><rect x="5.4" y="0.3" width="2.5" height="12.4" fill="#8fa9c2" transform="rotate(0 6.65 6.5)"/><rect x="5.4" y="0.3" width="2.5" height="12.4" fill="#8fa9c2" transform="rotate(45 6.65 6.5)"/><rect x="5.4" y="0.3" width="2.5" height="12.4" fill="#8fa9c2" transform="rotate(90 6.65 6.5)"/><rect x="5.4" y="0.3" width="2.5" height="12.4" fill="#8fa9c2" transform="rotate(135 6.65 6.5)"/><circle cx="6.65" cy="6.5" r="2" fill="#f0f0f0"/></svg>
<span class="a" style="left:293.00px;top:29.43px;font-family:'Liberation Sans',sans-serif;font-size:5.5px;color:#444;font-weight:400;line-height:7.15px;transform:scaleX(0.7273);transform-origin:0 50%;">MS</span>
<span class="a" style="left:293.00px;top:33.42px;font-family:'Liberation Sans',sans-serif;font-size:5.5px;color:#444;font-weight:400;line-height:7.15px;transform:scaleX(0.7805);transform-origin:0 50%;">Excel</span>
<svg style="left:293px;top:39px" width="12" height="4"><path d="M0.5 0 V2 H4" stroke="#4a9ad8" stroke-width="0.8" fill="none"/><rect x="5" y="0.5" width="7" height="3" fill="none" stroke="#444" stroke-width="0.7"/><path d="M7.3 0.5 V3.5 M9.6 0.5 V3.5" stroke="#444" stroke-width="0.6"/></svg>
<span class="a" style="left:312.50px;top:29.43px;font-family:'Liberation Sans',sans-serif;font-size:5.5px;color:#444;font-weight:400;line-height:7.15px;transform:scaleX(0.7503);transform-origin:0 50%;">Auto</span>
<span class="a" style="left:312.50px;top:33.42px;font-family:'Liberation Sans',sans-serif;font-size:5.5px;color:#444;font-weight:400;line-height:7.15px;transform:scaleX(0.7312);transform-origin:0 50%;">CAD</span>
<svg style="left:312.5px;top:39px" width="12" height="4"><path d="M0.5 0 V2 H4" stroke="#4a9ad8" stroke-width="0.8" fill="none"/><rect x="5" y="0.5" width="7" height="3" fill="none" stroke="#444" stroke-width="0.7"/><path d="M7.3 0.5 V3.5 M9.6 0.5 V3.5" stroke="#444" stroke-width="0.6"/></svg>
<svg style="left:332.7px;top:30.5px" width="10" height="13"><rect x="1.3" y="1.3" width="8.2" height="11.2" fill="#b8c8d8"/><rect x="0.5" y="0.5" width="8.2" height="11.2" fill="#fdfdfd" stroke="#555" stroke-width="0.8"/><text x="4.6" y="9" font-size="8" text-anchor="middle" fill="#333" font-family="Liberation Sans">?</text></svg>
<svg style="left:350.7px;top:32px" width="13.3" height="10"><rect x="0.5" y="0.5" width="12.3" height="9" fill="#eef3f8" stroke="#7a98b6" stroke-width="0.8"/><rect x="0.5" y="0.5" width="12.3" height="2" fill="#7a98b6"/><text x="2" y="8.3" font-size="6" fill="#557" font-family="Liberation Sans">D</text><rect x="7" y="4" width="4" height="4" fill="#a8b8c8"/></svg>
<svg style="left:370px;top:32px" width="13.3" height="10"><rect x="0.5" y="0.5" width="12.3" height="9" fill="#eef3f8" stroke="#7a98b6" stroke-width="0.8"/><rect x="0.5" y="0.5" width="12.3" height="2" fill="#7a98b6"/><rect x="2" y="4" width="9" height="3.5" rx="1.5" fill="#5a88c0"/></svg>
</body></html>
